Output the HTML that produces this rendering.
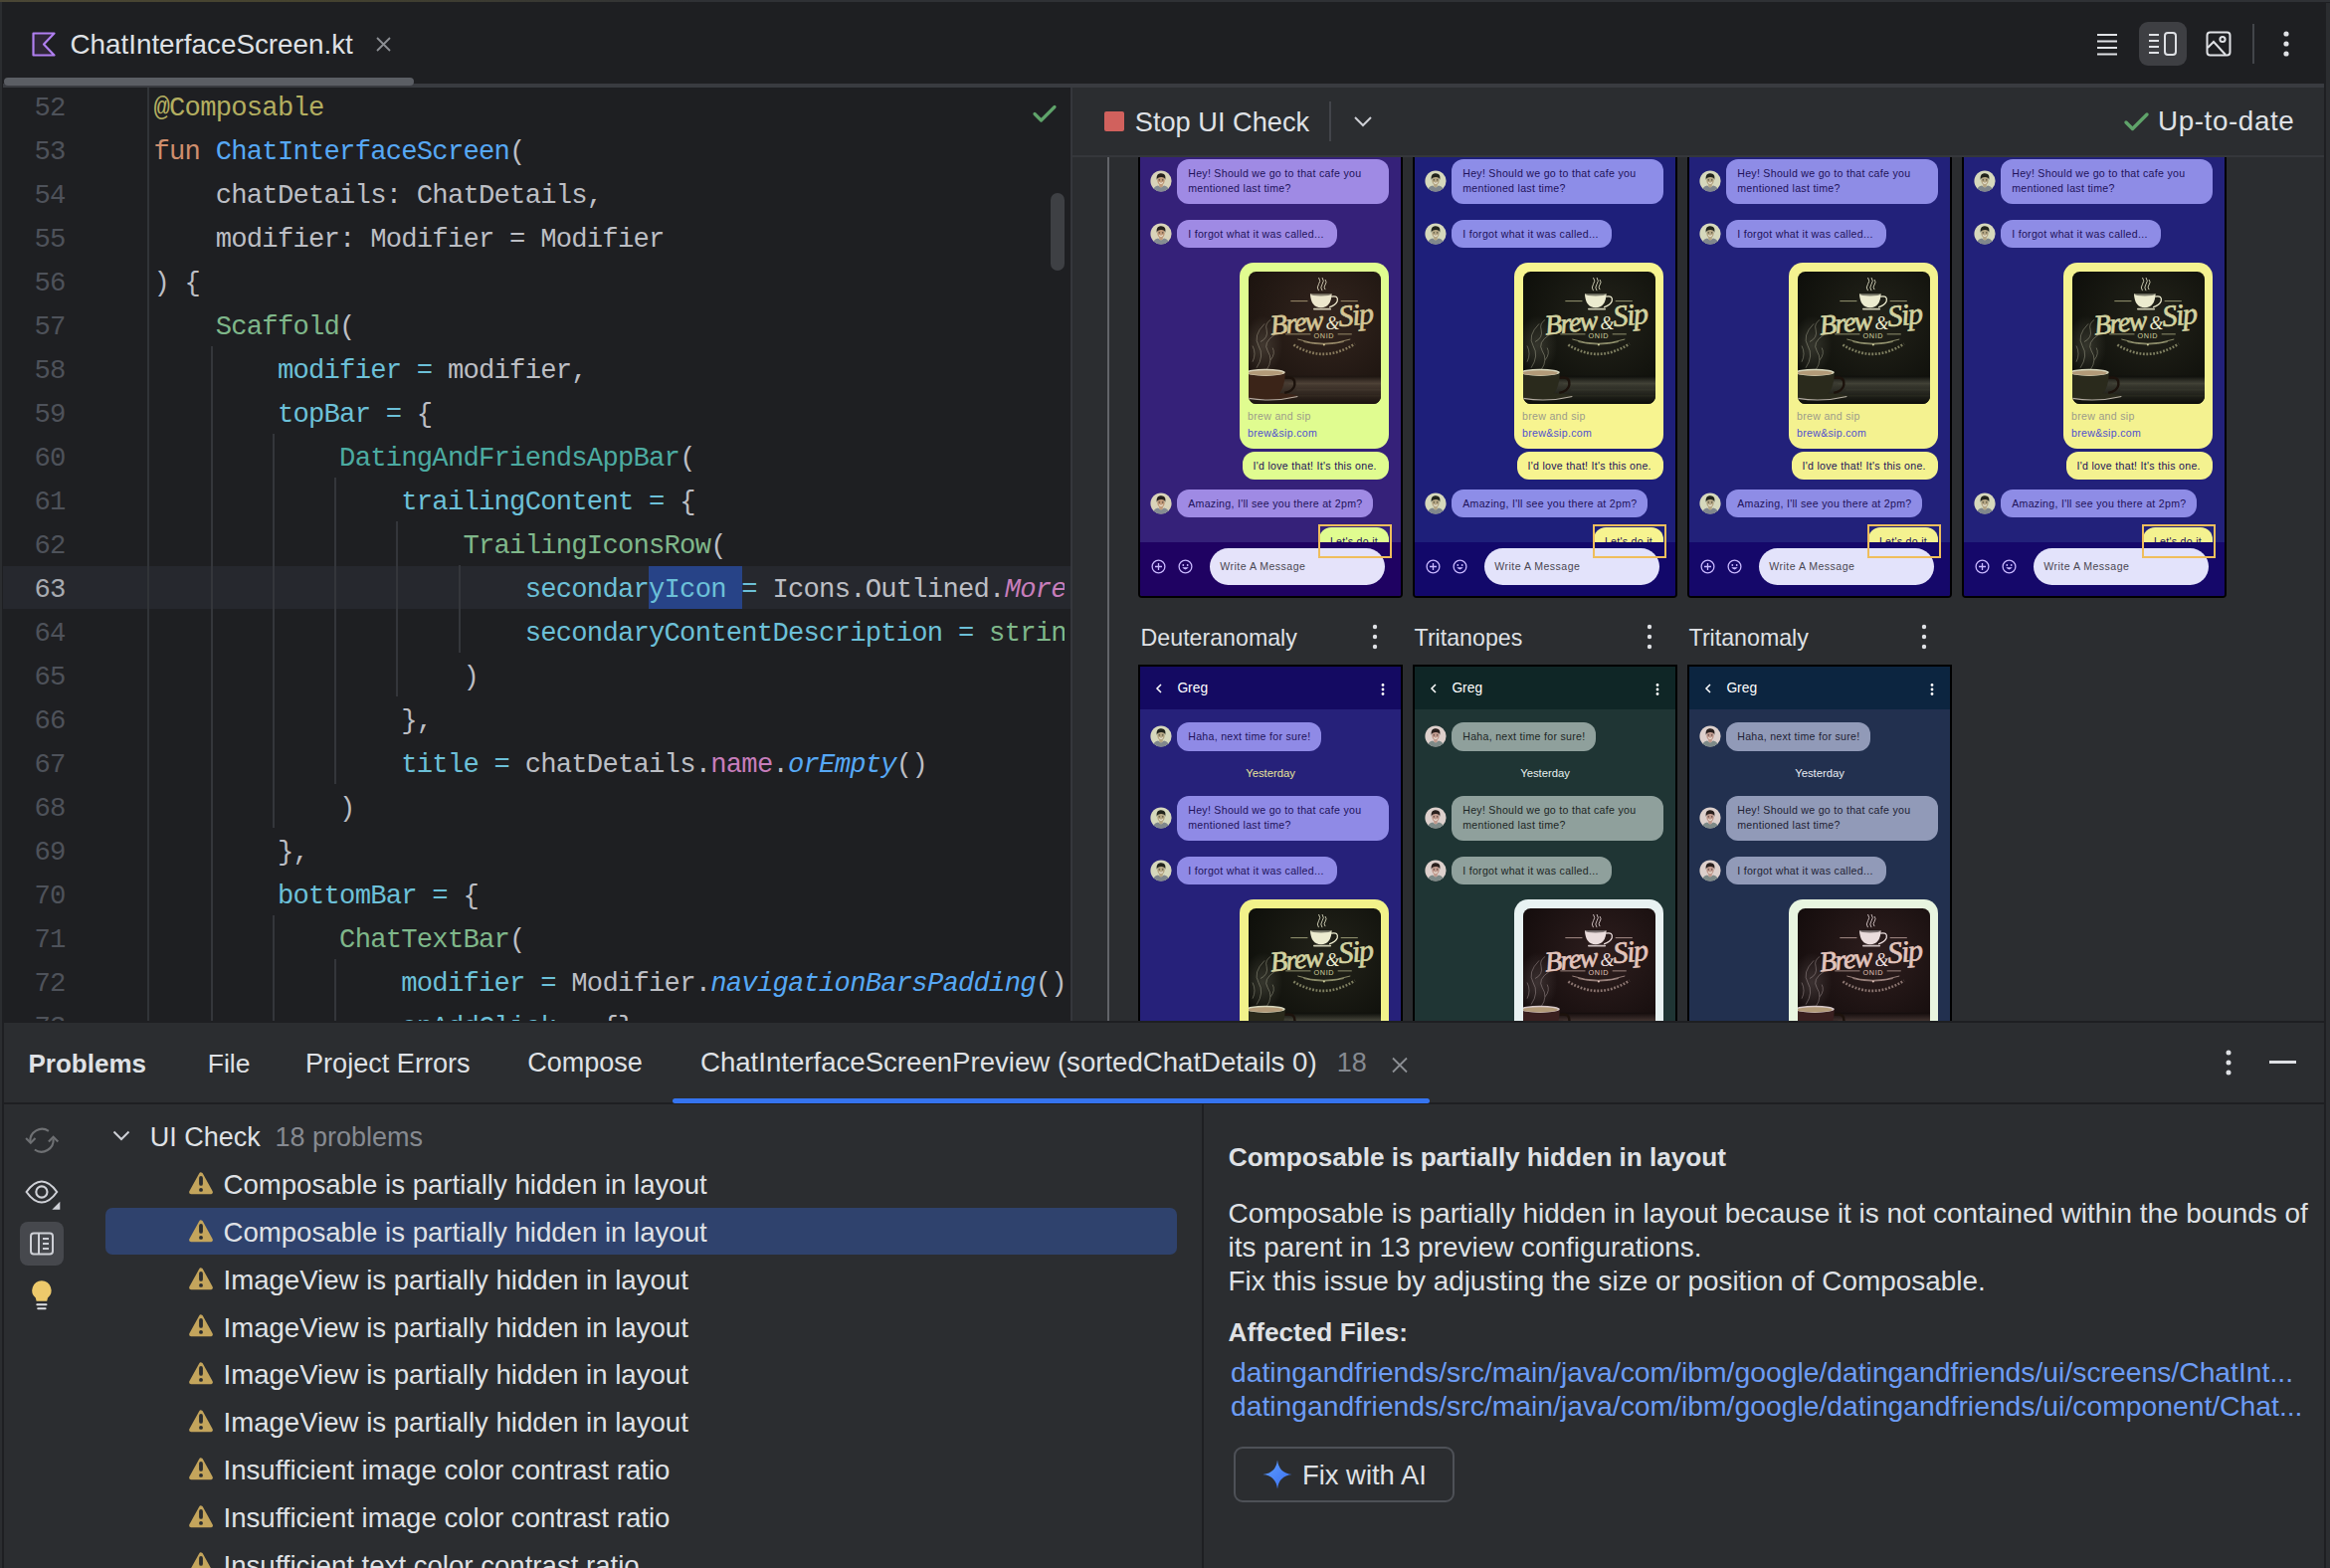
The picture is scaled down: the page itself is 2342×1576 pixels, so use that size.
<!DOCTYPE html>
<html><head><meta charset="utf-8"><style>
html,body{margin:0;padding:0;}
body{width:2342px;height:1576px;overflow:hidden;position:relative;background:#1e1f22;font-family:"Liberation Sans", sans-serif;}
.t{position:absolute;white-space:pre;}
.r{position:absolute;}
.a{position:absolute;}
svg{position:absolute;overflow:visible;}
</style></head><body>
<div class="r" style="left:0px;top:0px;width:2342px;height:2px;background:linear-gradient(90deg,#4a4635 0px,#46432f 300px,#2f3135 700px,#2f3135 2342px);"></div><div class="r" style="left:0px;top:2px;width:2px;height:1574px;background:#2b2d30;"></div><div class="r" style="left:2px;top:2px;width:2px;height:1574px;background:#1e1f22;"></div><div class="r" style="left:2336px;top:3px;width:2px;height:1573px;background:#1e1f22;"></div><div class="r" style="left:2338px;top:3px;width:4px;height:1573px;background:#2b2d30;"></div><div class="r" style="left:3px;top:3px;width:2333px;height:85px;background:#1e1f22;"></div><svg style="left:32px;top:32px" width="25" height="25" viewBox="0 0 25 25"><path d="M1.5 1.5 H22.5 L12 12.5 L22.5 23.5 H1.5 Z" fill="#2f2638" stroke="#b07ff0" stroke-width="2.2" stroke-linejoin="round"/></svg><div class="t" style="left:70.50px;top:27.16px;font-size:27.8px;line-height:36px;color:#dfe1e5;">ChatInterfaceScreen.kt</div><svg style="left:378px;top:37px" width="15" height="15" viewBox="0 0 15 15"><path d="M1 1L14 14M14 1L1 14" stroke="#8c8f94" stroke-width="1.8"/></svg><div class="r" style="left:3px;top:84px;width:2333px;height:4px;background:#393b40;"></div><div class="r" style="left:4px;top:78px;width:412px;height:8px;background:#5b5e64;border-radius:4px;"></div><svg style="left:2106px;top:32px" width="24" height="26" viewBox="0 0 24 26"><path d="M2 3H22M2 9.5H22M2 16H22M2 22.5H22" stroke="#dfe1e5" stroke-width="2"/></svg><div class="r" style="left:2150px;top:22px;width:48px;height:44px;background:#3e3f43;border-radius:9px;"></div><svg style="left:2158px;top:31px" width="32" height="28" viewBox="0 0 32 28"><path d="M2 3.9H12M2 10H12M2 16H12M2 21.9H12" stroke="#dfe1e5" stroke-width="2"/><rect x="18" y="2" width="11" height="22" rx="3" fill="none" stroke="#dfe1e5" stroke-width="2"/></svg><svg style="left:2217px;top:31px" width="28" height="28" viewBox="0 0 28 28"><rect x="1.5" y="1.5" width="23" height="23" rx="3" fill="none" stroke="#dfe1e5" stroke-width="2"/><circle cx="17" cy="8.5" r="2.6" fill="none" stroke="#dfe1e5" stroke-width="2"/><path d="M2 17L8 11L20 24" fill="none" stroke="#dfe1e5" stroke-width="2"/></svg><div class="r" style="left:2264px;top:24px;width:2px;height:40px;background:#43454a;"></div><svg style="left:2293px;top:29px" width="10" height="30" viewBox="0 0 10 30"><circle cx="5" cy="5" r="2.6" fill="#dfe1e5"/><circle cx="5" cy="15" r="2.6" fill="#dfe1e5"/><circle cx="5" cy="25" r="2.6" fill="#dfe1e5"/></svg><div class="r" style="left:3px;top:88px;width:1073px;height:938px;background:#1e1f22;"></div><div class="a" style="left:0;top:88px;width:1070px;height:938px;overflow:hidden;"><div class="a" style="left:0;top:-88px;width:1070px;height:1576px;"><div class="r" style="left:3px;top:569px;width:1073px;height:43px;background:#26282e;"></div><div class="r" style="left:652px;top:569px;width:94px;height:43px;background:#274387;"></div><div class="r" style="left:148px;top:88px;width:2px;height:938px;background:#313438;"></div><div class="r" style="left:212px;top:348px;width:2px;height:678px;background:#34363b;"></div><div class="r" style="left:274px;top:436px;width:2px;height:396px;background:#34363b;"></div><div class="r" style="left:274px;top:920px;width:2px;height:106px;background:#34363b;"></div><div class="r" style="left:336px;top:480px;width:2px;height:308px;background:#34363b;"></div><div class="r" style="left:336px;top:964px;width:2px;height:62px;background:#34363b;"></div><div class="r" style="left:398px;top:524px;width:2px;height:176px;background:#34363b;"></div><div class="r" style="left:461px;top:568px;width:2px;height:88px;background:#34363b;"></div><div class="t" style="left:34.40px;top:91.16px;font-size:27.2px;line-height:35px;color:#4e525a;font-family:'Liberation Mono', monospace;letter-spacing:-0.768px;">52</div><div class="t" style="left:154.50px;top:91.16px;font-size:27.2px;line-height:35px;color:#bcbec4;font-family:'Liberation Mono', monospace;letter-spacing:-0.768px;"><span style="color:#b3ae60;">@Composable</span></div><div class="t" style="left:34.40px;top:135.16px;font-size:27.2px;line-height:35px;color:#4e525a;font-family:'Liberation Mono', monospace;letter-spacing:-0.768px;">53</div><div class="t" style="left:154.50px;top:135.16px;font-size:27.2px;line-height:35px;color:#bcbec4;font-family:'Liberation Mono', monospace;letter-spacing:-0.768px;"><span style="color:#cf8e6d;">fun </span><span style="color:#56a8f5;">ChatInterfaceScreen</span><span style="color:#bcbec4;">(</span></div><div class="t" style="left:34.40px;top:179.16px;font-size:27.2px;line-height:35px;color:#4e525a;font-family:'Liberation Mono', monospace;letter-spacing:-0.768px;">54</div><div class="t" style="left:154.50px;top:179.16px;font-size:27.2px;line-height:35px;color:#bcbec4;font-family:'Liberation Mono', monospace;letter-spacing:-0.768px;"><span style="color:#bcbec4;">    chatDetails: ChatDetails,</span></div><div class="t" style="left:34.40px;top:223.16px;font-size:27.2px;line-height:35px;color:#4e525a;font-family:'Liberation Mono', monospace;letter-spacing:-0.768px;">55</div><div class="t" style="left:154.50px;top:223.16px;font-size:27.2px;line-height:35px;color:#bcbec4;font-family:'Liberation Mono', monospace;letter-spacing:-0.768px;"><span style="color:#bcbec4;">    modifier: Modifier = Modifier</span></div><div class="t" style="left:34.40px;top:267.16px;font-size:27.2px;line-height:35px;color:#4e525a;font-family:'Liberation Mono', monospace;letter-spacing:-0.768px;">56</div><div class="t" style="left:154.50px;top:267.16px;font-size:27.2px;line-height:35px;color:#bcbec4;font-family:'Liberation Mono', monospace;letter-spacing:-0.768px;"><span style="color:#bcbec4;">) {</span></div><div class="t" style="left:34.40px;top:311.16px;font-size:27.2px;line-height:35px;color:#4e525a;font-family:'Liberation Mono', monospace;letter-spacing:-0.768px;">57</div><div class="t" style="left:154.50px;top:311.16px;font-size:27.2px;line-height:35px;color:#bcbec4;font-family:'Liberation Mono', monospace;letter-spacing:-0.768px;"><span style="color:#bcbec4;">    </span><span style="color:#7fb78a;">Scaffold</span><span style="color:#bcbec4;">(</span></div><div class="t" style="left:34.40px;top:355.16px;font-size:27.2px;line-height:35px;color:#4e525a;font-family:'Liberation Mono', monospace;letter-spacing:-0.768px;">58</div><div class="t" style="left:154.50px;top:355.16px;font-size:27.2px;line-height:35px;color:#bcbec4;font-family:'Liberation Mono', monospace;letter-spacing:-0.768px;"><span style="color:#bcbec4;">        </span><span style="color:#6cc0d8;">modifier =</span><span style="color:#bcbec4;"> modifier,</span></div><div class="t" style="left:34.40px;top:399.16px;font-size:27.2px;line-height:35px;color:#4e525a;font-family:'Liberation Mono', monospace;letter-spacing:-0.768px;">59</div><div class="t" style="left:154.50px;top:399.16px;font-size:27.2px;line-height:35px;color:#bcbec4;font-family:'Liberation Mono', monospace;letter-spacing:-0.768px;"><span style="color:#bcbec4;">        </span><span style="color:#6cc0d8;">topBar =</span><span style="color:#bcbec4;"> {</span></div><div class="t" style="left:34.40px;top:443.16px;font-size:27.2px;line-height:35px;color:#4e525a;font-family:'Liberation Mono', monospace;letter-spacing:-0.768px;">60</div><div class="t" style="left:154.50px;top:443.16px;font-size:27.2px;line-height:35px;color:#bcbec4;font-family:'Liberation Mono', monospace;letter-spacing:-0.768px;"><span style="color:#bcbec4;">            </span><span style="color:#4caba1;">DatingAndFriendsAppBar</span><span style="color:#bcbec4;">(</span></div><div class="t" style="left:34.40px;top:487.16px;font-size:27.2px;line-height:35px;color:#4e525a;font-family:'Liberation Mono', monospace;letter-spacing:-0.768px;">61</div><div class="t" style="left:154.50px;top:487.16px;font-size:27.2px;line-height:35px;color:#bcbec4;font-family:'Liberation Mono', monospace;letter-spacing:-0.768px;"><span style="color:#bcbec4;">                </span><span style="color:#6cc0d8;">trailingContent =</span><span style="color:#bcbec4;"> {</span></div><div class="t" style="left:34.40px;top:531.16px;font-size:27.2px;line-height:35px;color:#4e525a;font-family:'Liberation Mono', monospace;letter-spacing:-0.768px;">62</div><div class="t" style="left:154.50px;top:531.16px;font-size:27.2px;line-height:35px;color:#bcbec4;font-family:'Liberation Mono', monospace;letter-spacing:-0.768px;"><span style="color:#bcbec4;">                    </span><span style="color:#7fb78a;">TrailingIconsRow</span><span style="color:#bcbec4;">(</span></div><div class="t" style="left:34.40px;top:575.16px;font-size:27.2px;line-height:35px;color:#a8abb1;font-family:'Liberation Mono', monospace;letter-spacing:-0.768px;">63</div><div class="t" style="left:154.50px;top:575.16px;font-size:27.2px;line-height:35px;color:#bcbec4;font-family:'Liberation Mono', monospace;letter-spacing:-0.768px;"><span style="color:#bcbec4;">                        </span><span style="color:#6cc0d8;">secondaryIcon</span><span style="color:#bcbec4;"> </span><span style="color:#6cc0d8;">=</span><span style="color:#bcbec4;"> Icons.Outlined.</span><span style="color:#c77dbb;font-style:italic;">More</span></div><div class="t" style="left:34.40px;top:619.16px;font-size:27.2px;line-height:35px;color:#4e525a;font-family:'Liberation Mono', monospace;letter-spacing:-0.768px;">64</div><div class="t" style="left:154.50px;top:619.16px;font-size:27.2px;line-height:35px;color:#bcbec4;font-family:'Liberation Mono', monospace;letter-spacing:-0.768px;"><span style="color:#bcbec4;">                        </span><span style="color:#6cc0d8;">secondaryContentDescription =</span><span style="color:#bcbec4;"> </span><span style="color:#7fb78a;">stringResource</span></div><div class="t" style="left:34.40px;top:663.16px;font-size:27.2px;line-height:35px;color:#4e525a;font-family:'Liberation Mono', monospace;letter-spacing:-0.768px;">65</div><div class="t" style="left:154.50px;top:663.16px;font-size:27.2px;line-height:35px;color:#bcbec4;font-family:'Liberation Mono', monospace;letter-spacing:-0.768px;"><span style="color:#bcbec4;">                    )</span></div><div class="t" style="left:34.40px;top:707.16px;font-size:27.2px;line-height:35px;color:#4e525a;font-family:'Liberation Mono', monospace;letter-spacing:-0.768px;">66</div><div class="t" style="left:154.50px;top:707.16px;font-size:27.2px;line-height:35px;color:#bcbec4;font-family:'Liberation Mono', monospace;letter-spacing:-0.768px;"><span style="color:#bcbec4;">                },</span></div><div class="t" style="left:34.40px;top:751.16px;font-size:27.2px;line-height:35px;color:#4e525a;font-family:'Liberation Mono', monospace;letter-spacing:-0.768px;">67</div><div class="t" style="left:154.50px;top:751.16px;font-size:27.2px;line-height:35px;color:#bcbec4;font-family:'Liberation Mono', monospace;letter-spacing:-0.768px;"><span style="color:#bcbec4;">                </span><span style="color:#6cc0d8;">title =</span><span style="color:#bcbec4;"> chatDetails.</span><span style="color:#c77dbb;">name</span><span style="color:#bcbec4;">.</span><span style="color:#56a8f5;font-style:italic;">orEmpty</span><span style="color:#bcbec4;">()</span></div><div class="t" style="left:34.40px;top:795.16px;font-size:27.2px;line-height:35px;color:#4e525a;font-family:'Liberation Mono', monospace;letter-spacing:-0.768px;">68</div><div class="t" style="left:154.50px;top:795.16px;font-size:27.2px;line-height:35px;color:#bcbec4;font-family:'Liberation Mono', monospace;letter-spacing:-0.768px;"><span style="color:#bcbec4;">            )</span></div><div class="t" style="left:34.40px;top:839.16px;font-size:27.2px;line-height:35px;color:#4e525a;font-family:'Liberation Mono', monospace;letter-spacing:-0.768px;">69</div><div class="t" style="left:154.50px;top:839.16px;font-size:27.2px;line-height:35px;color:#bcbec4;font-family:'Liberation Mono', monospace;letter-spacing:-0.768px;"><span style="color:#bcbec4;">        },</span></div><div class="t" style="left:34.40px;top:883.16px;font-size:27.2px;line-height:35px;color:#4e525a;font-family:'Liberation Mono', monospace;letter-spacing:-0.768px;">70</div><div class="t" style="left:154.50px;top:883.16px;font-size:27.2px;line-height:35px;color:#bcbec4;font-family:'Liberation Mono', monospace;letter-spacing:-0.768px;"><span style="color:#bcbec4;">        </span><span style="color:#6cc0d8;">bottomBar =</span><span style="color:#bcbec4;"> {</span></div><div class="t" style="left:34.40px;top:927.16px;font-size:27.2px;line-height:35px;color:#4e525a;font-family:'Liberation Mono', monospace;letter-spacing:-0.768px;">71</div><div class="t" style="left:154.50px;top:927.16px;font-size:27.2px;line-height:35px;color:#bcbec4;font-family:'Liberation Mono', monospace;letter-spacing:-0.768px;"><span style="color:#bcbec4;">            </span><span style="color:#7fb78a;">ChatTextBar</span><span style="color:#bcbec4;">(</span></div><div class="t" style="left:34.40px;top:971.16px;font-size:27.2px;line-height:35px;color:#4e525a;font-family:'Liberation Mono', monospace;letter-spacing:-0.768px;">72</div><div class="t" style="left:154.50px;top:971.16px;font-size:27.2px;line-height:35px;color:#bcbec4;font-family:'Liberation Mono', monospace;letter-spacing:-0.768px;"><span style="color:#bcbec4;">                </span><span style="color:#6cc0d8;">modifier =</span><span style="color:#bcbec4;"> Modifier.</span><span style="color:#56a8f5;font-style:italic;">navigationBarsPadding</span><span style="color:#bcbec4;">()</span></div><div class="t" style="left:34.40px;top:1015.16px;font-size:27.2px;line-height:35px;color:#4e525a;font-family:'Liberation Mono', monospace;letter-spacing:-0.768px;">73</div><div class="t" style="left:154.50px;top:1015.16px;font-size:27.2px;line-height:35px;color:#bcbec4;font-family:'Liberation Mono', monospace;letter-spacing:-0.768px;"><span style="color:#bcbec4;">                </span><span style="color:#6cc0d8;">onAddClick =</span><span style="color:#bcbec4;"> {},</span></div></div></div><svg style="left:1037px;top:105px" width="26" height="20" viewBox="0 0 26 20"><path d="M3 9.5L9.5 16L23 2.5" fill="none" stroke="#5fa36a" stroke-width="3.2" stroke-linecap="round" stroke-linejoin="round"/></svg><div class="r" style="left:1056px;top:194px;width:14px;height:78px;background:#3e4044;border-radius:7px;"></div><div class="r" style="left:1070px;top:569px;width:6px;height:43px;background:#26282e;"></div><div class="r" style="left:1076px;top:88px;width:2px;height:938px;background:#35373c;"></div><div class="r" style="left:1078px;top:88px;width:1258px;height:938px;background:#2b2d30;"></div><div class="r" style="left:1078px;top:156px;width:1258px;height:2px;background:#35373b;"></div><div class="r" style="left:1110px;top:112px;width:20px;height:20px;background:#d1615d;border-radius:2px;"></div><div class="t" style="left:1140.80px;top:105.27px;font-size:27.2px;line-height:35px;color:#dfe1e5;">Stop UI Check</div><div class="r" style="left:1336px;top:102px;width:2px;height:40px;background:#43454a;"></div><svg style="left:1359px;top:114px" width="22" height="16" viewBox="0 0 22 16"><path d="M3 4L11 12L19 4" fill="none" stroke="#ced0d6" stroke-width="2"/></svg><svg style="left:2133px;top:110px" width="30" height="24" viewBox="0 0 30 24"><path d="M4 13L10.5 19.5L25 5" fill="none" stroke="#5fa36a" stroke-width="3.4" stroke-linecap="round" stroke-linejoin="round"/></svg><div class="t" style="left:2169.00px;top:104.26px;font-size:27.8px;line-height:36px;color:#dfe1e5;letter-spacing:0.6px;">Up-to-date</div><div class="a" style="left:1078px;top:158px;width:1258px;height:868px;overflow:hidden;"><div class="a" style="left:-1078px;top:-158px;width:2342px;height:1576px;"><div class="r" style="left:1113px;top:158px;width:2px;height:868px;background:#626469;"></div><div class="a" style="left:1144px;top:28px;width:262px;height:569px;border:2px solid #000;border-radius:0 0 4px 4px;background:#352179;overflow:hidden;"><div class="r" style="left:0px;top:0px;width:262px;height:43px;background:#23096a;"></div><svg style="left:15px;top:16.5px" width="8" height="10" viewBox="0 0 8 10"><path d="M6 1L2 5L6 9" stroke="#ffffff" stroke-width="1.5" fill="none"/></svg><div class="t" style="left:37.40px;top:13.02px;font-size:13.8px;line-height:18px;color:#ffffff;">Greg</div><svg style="left:240.5px;top:16.5px" width="6" height="12" viewBox="0 0 6 12"><circle cx="3" cy="1.5" r="1.4" fill="#fff"/><circle cx="3" cy="6" r="1.4" fill="#fff"/><circle cx="3" cy="10.5" r="1.4" fill="#fff"/></svg><div class="r" style="left:37px;top:56px;width:145px;height:29px;background:#9f8ae4;border-radius:12px;"></div><div class="t" style="left:48.20px;top:63.12px;font-size:10.6px;line-height:14px;color:#21125a;letter-spacing:0.29px;">Haha, next time for sure!</div><svg style="left:10px;top:59px" width="22" height="22" viewBox="0 0 22 22"><defs><clipPath id="ac"><circle cx="11" cy="11" r="10.6"/></clipPath></defs><g clip-path="url(#ac)"><rect width="22" height="22" fill="#d9d3b9"/><path d="M2 22 Q3 16.5 8 15.5 L11 17.5 L14 15.5 Q19 16.5 20 22Z" fill="#858c92"/><path d="M9.2 13.5 H12.8 V16.5 L11 17.5 L9.2 16.5Z" fill="#c09a7a"/><ellipse cx="11" cy="10.6" rx="3.7" ry="4.6" fill="#c09a7a"/><path d="M6.8 9.8 C6 5.2 8.2 3.2 11.2 3.3 C14.5 3.4 16.2 5.6 15.2 9.8 C14.8 7.6 13.6 6.8 11 6.9 C8.6 7 7.3 7.8 6.8 9.8Z" fill="#26201c"/><path d="M9.1 12.6 Q11 14.2 12.9 12.6" stroke="#f4f0e4" stroke-width="1" fill="none"/><path d="M8.6 9.9H10M12 9.9H13.4" stroke="#26201c" stroke-width="0.8"/></g></svg><div class="t" style="left:106.20px;top:99.58px;font-size:11.3px;line-height:15px;color:#e6e09a;">Yesterday</div><div class="r" style="left:37px;top:130px;width:213px;height:45px;background:#9f8ae4;border-radius:12px;"></div><div class="t" style="left:48.20px;top:136.97px;font-size:10.6px;line-height:14px;color:#21125a;letter-spacing:0.29px;">Hey! Should we go to that cafe you</div><div class="t" style="left:48.20px;top:152.07px;font-size:10.6px;line-height:14px;color:#21125a;letter-spacing:0.29px;">mentioned last time?</div><svg style="left:10px;top:141px" width="22" height="22" viewBox="0 0 22 22"><defs><clipPath id="ac"><circle cx="11" cy="11" r="10.6"/></clipPath></defs><g clip-path="url(#ac)"><rect width="22" height="22" fill="#d9d3b9"/><path d="M2 22 Q3 16.5 8 15.5 L11 17.5 L14 15.5 Q19 16.5 20 22Z" fill="#858c92"/><path d="M9.2 13.5 H12.8 V16.5 L11 17.5 L9.2 16.5Z" fill="#c09a7a"/><ellipse cx="11" cy="10.6" rx="3.7" ry="4.6" fill="#c09a7a"/><path d="M6.8 9.8 C6 5.2 8.2 3.2 11.2 3.3 C14.5 3.4 16.2 5.6 15.2 9.8 C14.8 7.6 13.6 6.8 11 6.9 C8.6 7 7.3 7.8 6.8 9.8Z" fill="#26201c"/><path d="M9.1 12.6 Q11 14.2 12.9 12.6" stroke="#f4f0e4" stroke-width="1" fill="none"/><path d="M8.6 9.9H10M12 9.9H13.4" stroke="#26201c" stroke-width="0.8"/></g></svg><div class="r" style="left:37px;top:191px;width:161px;height:28px;background:#9f8ae4;border-radius:12px;"></div><div class="t" style="left:48.20px;top:197.97px;font-size:10.6px;line-height:14px;color:#21125a;letter-spacing:0.29px;">I forgot what it was called...</div><svg style="left:10px;top:194px" width="22" height="22" viewBox="0 0 22 22"><defs><clipPath id="ac"><circle cx="11" cy="11" r="10.6"/></clipPath></defs><g clip-path="url(#ac)"><rect width="22" height="22" fill="#d9d3b9"/><path d="M2 22 Q3 16.5 8 15.5 L11 17.5 L14 15.5 Q19 16.5 20 22Z" fill="#858c92"/><path d="M9.2 13.5 H12.8 V16.5 L11 17.5 L9.2 16.5Z" fill="#c09a7a"/><ellipse cx="11" cy="10.6" rx="3.7" ry="4.6" fill="#c09a7a"/><path d="M6.8 9.8 C6 5.2 8.2 3.2 11.2 3.3 C14.5 3.4 16.2 5.6 15.2 9.8 C14.8 7.6 13.6 6.8 11 6.9 C8.6 7 7.3 7.8 6.8 9.8Z" fill="#26201c"/><path d="M9.1 12.6 Q11 14.2 12.9 12.6" stroke="#f4f0e4" stroke-width="1" fill="none"/><path d="M8.6 9.9H10M12 9.9H13.4" stroke="#26201c" stroke-width="0.8"/></g></svg><div class="r" style="left:100px;top:234px;width:150px;height:187px;background:#e0fc90;border-radius:14px;"></div><svg style="left:109px;top:243px" width="133" height="133" viewBox="0 0 132 132"><defs><radialGradient id="bgb1" cx="0.6" cy="0.35" r="0.75"><stop offset="0" stop-color="#33251e"/><stop offset="1" stop-color="#1a120e"/></radialGradient><linearGradient id="tbb1" x1="0" y1="0" x2="0" y2="1"><stop offset="0" stop-color="#1a120e"/><stop offset="0.25" stop-color="#4a3e34"/><stop offset="1" stop-color="#1a120e"/></linearGradient><clipPath id="clb1"><rect width="132" height="132" rx="7.5"/></clipPath></defs><g clip-path="url(#clb1)"><rect width="132" height="132" fill="url(#bgb1)"/><rect y="104" width="132" height="28" fill="url(#tbb1)"/><path d="M40 112H132M48 118H132M36 124H132" stroke="#d4c595" stroke-width="0.5" opacity="0.12"/><path d="M70 19 q-2.5 -3 0 -6.5 q2.5 -3 0 -6.5 M73.5 19 q-2.5 -3 0 -6.5 q2.5 -3 0 -6.5 M76.5 18 q-2 -2.5 0 -5 q2 -2.5 0 -5" stroke="#ece6cc" stroke-width="0.9" fill="none" opacity="0.9"/><path d="M61.5 22 H83 Q82.5 35.5 72.3 36 Q62 35.5 61.5 22Z" fill="#ece6cc"/><ellipse cx="72.2" cy="22.6" rx="10.5" ry="1.6" fill="#1a120e" opacity="0.5"/><path d="M82.5 25 q7.5 -1.5 6 4.5 q-1.5 4 -8 6" stroke="#ece6cc" stroke-width="1.3" fill="none"/><rect x="64.5" y="36.4" width="18" height="1.8" rx="0.9" fill="#ece6cc" opacity="0.85"/><path d="M42 29.4 H59 M92 29.4 H109" stroke="#d4c595" stroke-width="0.9" opacity="0.75"/><text x="22" y="60" font-family="Liberation Serif" font-style="italic" font-size="28" fill="#d4c595" stroke="#d4c595" stroke-width="0.7" letter-spacing="-1.6" transform="rotate(-6 50 55)">Brew</text><text x="77" y="58" font-family="Liberation Serif" font-style="italic" font-size="18" fill="#ece6cc">&amp;</text><text x="90" y="53" font-family="Liberation Serif" font-style="italic" font-size="30" fill="#d4c595" stroke="#d4c595" stroke-width="0.7" letter-spacing="-1.4" transform="rotate(-6 108 48)">Sip</text><path d="M37 62.4 H62 M89 62.4 H103" stroke="#d4c595" stroke-width="0.8" opacity="0.8"/><text x="75.3" y="66.3" text-anchor="middle" font-family="Liberation Sans" font-size="7.2" fill="#d4c595" letter-spacing="0.6">ONID</text><path d="M49 67.5 Q75 76 101.5 67.5 M55 70 Q75 75 95 70" stroke="#d4c595" stroke-width="0.7" fill="none" opacity="0.85"/><circle cx="75.3" cy="73" r="1" fill="#d4c595"/><path d="M45 73 Q75 92 106 72" stroke="#d4c595" stroke-width="2.6" fill="none" stroke-dasharray="1.8 1.6" opacity="0.55"/><radialGradient id="smb1" cx="0.5" cy="0.5" r="0.5"><stop offset="0" stop-color="#ece6cc" stop-opacity="0.16"/><stop offset="1" stop-color="#ece6cc" stop-opacity="0"/></radialGradient><ellipse cx="14" cy="74" rx="20" ry="30" fill="url(#smb1)"/><path d="M8 96 q8 -12 2 -22 q-6 -10 6 -22 M18 98 q7 -10 1 -19 q-5 -8 7 -16 M4 90 q4 -8 0 -16 M12 70 q8 -4 6 -12 q-2 -6 4 -10 M22 88 q5 -6 2 -12" stroke="#ece6cc" stroke-width="0.8" fill="none" opacity="0.38"/><ellipse cx="22" cy="124.5" rx="27" ry="3.4" fill="#3b2418"/><path d="M-5 125.5 Q22 131 49 124.5" stroke="#d8d0c4" stroke-width="1" fill="none" opacity="0.8"/><path d="M36 106 q11 -2 10 7 q-1 6 -10 8" stroke="#1c120c" stroke-width="2.4" fill="none"/><path d="M-2 100.5 H36.5 Q36 121 26 124 H-2Z" fill="#3b2418"/><ellipse cx="17" cy="100.5" rx="19.5" ry="3.6" fill="#ece6cc" opacity="0.9"/><ellipse cx="17" cy="101" rx="17.5" ry="2.6" fill="#b29a78"/></g></svg><div class="t" style="left:108.00px;top:381.32px;font-size:10.6px;line-height:14px;color:#9c9c8a;letter-spacing:0.3px;">brew and sip</div><div class="t" style="left:108.00px;top:397.82px;font-size:10.6px;line-height:14px;color:#5050d0;letter-spacing:0.3px;">brew&amp;sip.com</div><div class="r" style="left:103px;top:424px;width:147px;height:28px;background:#e0fc90;border-radius:12px;"></div><div class="t" style="left:113.50px;top:430.87px;font-size:10.6px;line-height:14px;color:#21125a;letter-spacing:0.29px;">I&#x27;d love that! It&#x27;s this one.</div><div class="r" style="left:37px;top:462px;width:197px;height:28px;background:#9f8ae4;border-radius:12px;"></div><div class="t" style="left:48.20px;top:469.02px;font-size:10.6px;line-height:14px;color:#21125a;letter-spacing:0.29px;">Amazing, I&#x27;ll see you there at 2pm?</div><svg style="left:10px;top:465px" width="22" height="22" viewBox="0 0 22 22"><defs><clipPath id="ac"><circle cx="11" cy="11" r="10.6"/></clipPath></defs><g clip-path="url(#ac)"><rect width="22" height="22" fill="#d9d3b9"/><path d="M2 22 Q3 16.5 8 15.5 L11 17.5 L14 15.5 Q19 16.5 20 22Z" fill="#858c92"/><path d="M9.2 13.5 H12.8 V16.5 L11 17.5 L9.2 16.5Z" fill="#c09a7a"/><ellipse cx="11" cy="10.6" rx="3.7" ry="4.6" fill="#c09a7a"/><path d="M6.8 9.8 C6 5.2 8.2 3.2 11.2 3.3 C14.5 3.4 16.2 5.6 15.2 9.8 C14.8 7.6 13.6 6.8 11 6.9 C8.6 7 7.3 7.8 6.8 9.8Z" fill="#26201c"/><path d="M9.1 12.6 Q11 14.2 12.9 12.6" stroke="#f4f0e4" stroke-width="1" fill="none"/><path d="M8.6 9.9H10M12 9.9H13.4" stroke="#26201c" stroke-width="0.8"/></g></svg><div class="r" style="left:180px;top:500px;width:70px;height:28px;background:#e0fc90;border-radius:12px;"></div><div class="t" style="left:190.90px;top:506.72px;font-size:10.6px;line-height:14px;color:#21125a;letter-spacing:0.29px;">Let&#x27;s do it</div><div class="r" style="left:0px;top:515px;width:262px;height:60px;background:#1f0262;"></div><svg style="left:11.1px;top:531.5px" width="15" height="15" viewBox="0 0 15 15"><circle cx="7.5" cy="7.5" r="6.4" stroke="#c9b8ff" stroke-width="1.3" fill="none"/><path d="M7.5 4V11M4 7.5H11" stroke="#c9b8ff" stroke-width="1.3"/></svg><svg style="left:37.9px;top:531.5px" width="15" height="15" viewBox="0 0 15 15"><circle cx="7.5" cy="7.5" r="6.4" stroke="#c9b8ff" stroke-width="1.3" fill="none"/><circle cx="5.3" cy="6" r="0.9" fill="#c9b8ff"/><circle cx="9.7" cy="6" r="0.9" fill="#c9b8ff"/><path d="M4.3 8.3 Q7.5 12.5 10.7 8.3Z" fill="#c9b8ff"/></svg><div class="r" style="left:70px;top:521px;width:176px;height:37px;background:#e5e3fa;border-radius:18.5px;"></div><div class="t" style="left:80.30px;top:532.32px;font-size:10.6px;line-height:14px;color:#4a4752;letter-spacing:0.45px;">Write A Message</div></div><div class="r" style="left:1325px;top:527px;width:70px;height:30px;background:transparent;border:2px solid #efbe5c;"></div><div class="a" style="left:1420px;top:28px;width:262px;height:569px;border:2px solid #000;border-radius:0 0 4px 4px;background:#1e1f7a;overflow:hidden;"><div class="r" style="left:0px;top:0px;width:262px;height:43px;background:#120a6a;"></div><svg style="left:15px;top:16.5px" width="8" height="10" viewBox="0 0 8 10"><path d="M6 1L2 5L6 9" stroke="#ffffff" stroke-width="1.5" fill="none"/></svg><div class="t" style="left:37.40px;top:13.02px;font-size:13.8px;line-height:18px;color:#ffffff;">Greg</div><svg style="left:240.5px;top:16.5px" width="6" height="12" viewBox="0 0 6 12"><circle cx="3" cy="1.5" r="1.4" fill="#fff"/><circle cx="3" cy="6" r="1.4" fill="#fff"/><circle cx="3" cy="10.5" r="1.4" fill="#fff"/></svg><div class="r" style="left:37px;top:56px;width:145px;height:29px;background:#8d8de8;border-radius:12px;"></div><div class="t" style="left:48.20px;top:63.12px;font-size:10.6px;line-height:14px;color:#21125a;letter-spacing:0.29px;">Haha, next time for sure!</div><svg style="left:10px;top:59px" width="22" height="22" viewBox="0 0 22 22"><defs><clipPath id="ac"><circle cx="11" cy="11" r="10.6"/></clipPath></defs><g clip-path="url(#ac)"><rect width="22" height="22" fill="#d6d8bc"/><path d="M2 22 Q3 16.5 8 15.5 L11 17.5 L14 15.5 Q19 16.5 20 22Z" fill="#80878c"/><path d="M9.2 13.5 H12.8 V16.5 L11 17.5 L9.2 16.5Z" fill="#b4a684"/><ellipse cx="11" cy="10.6" rx="3.7" ry="4.6" fill="#b4a684"/><path d="M6.8 9.8 C6 5.2 8.2 3.2 11.2 3.3 C14.5 3.4 16.2 5.6 15.2 9.8 C14.8 7.6 13.6 6.8 11 6.9 C8.6 7 7.3 7.8 6.8 9.8Z" fill="#22241c"/><path d="M9.1 12.6 Q11 14.2 12.9 12.6" stroke="#f4f0e4" stroke-width="1" fill="none"/><path d="M8.6 9.9H10M12 9.9H13.4" stroke="#22241c" stroke-width="0.8"/></g></svg><div class="t" style="left:106.20px;top:99.58px;font-size:11.3px;line-height:15px;color:#e6e09a;">Yesterday</div><div class="r" style="left:37px;top:130px;width:213px;height:45px;background:#8d8de8;border-radius:12px;"></div><div class="t" style="left:48.20px;top:136.97px;font-size:10.6px;line-height:14px;color:#21125a;letter-spacing:0.29px;">Hey! Should we go to that cafe you</div><div class="t" style="left:48.20px;top:152.07px;font-size:10.6px;line-height:14px;color:#21125a;letter-spacing:0.29px;">mentioned last time?</div><svg style="left:10px;top:141px" width="22" height="22" viewBox="0 0 22 22"><defs><clipPath id="ac"><circle cx="11" cy="11" r="10.6"/></clipPath></defs><g clip-path="url(#ac)"><rect width="22" height="22" fill="#d6d8bc"/><path d="M2 22 Q3 16.5 8 15.5 L11 17.5 L14 15.5 Q19 16.5 20 22Z" fill="#80878c"/><path d="M9.2 13.5 H12.8 V16.5 L11 17.5 L9.2 16.5Z" fill="#b4a684"/><ellipse cx="11" cy="10.6" rx="3.7" ry="4.6" fill="#b4a684"/><path d="M6.8 9.8 C6 5.2 8.2 3.2 11.2 3.3 C14.5 3.4 16.2 5.6 15.2 9.8 C14.8 7.6 13.6 6.8 11 6.9 C8.6 7 7.3 7.8 6.8 9.8Z" fill="#22241c"/><path d="M9.1 12.6 Q11 14.2 12.9 12.6" stroke="#f4f0e4" stroke-width="1" fill="none"/><path d="M8.6 9.9H10M12 9.9H13.4" stroke="#22241c" stroke-width="0.8"/></g></svg><div class="r" style="left:37px;top:191px;width:161px;height:28px;background:#8d8de8;border-radius:12px;"></div><div class="t" style="left:48.20px;top:197.97px;font-size:10.6px;line-height:14px;color:#21125a;letter-spacing:0.29px;">I forgot what it was called...</div><svg style="left:10px;top:194px" width="22" height="22" viewBox="0 0 22 22"><defs><clipPath id="ac"><circle cx="11" cy="11" r="10.6"/></clipPath></defs><g clip-path="url(#ac)"><rect width="22" height="22" fill="#d6d8bc"/><path d="M2 22 Q3 16.5 8 15.5 L11 17.5 L14 15.5 Q19 16.5 20 22Z" fill="#80878c"/><path d="M9.2 13.5 H12.8 V16.5 L11 17.5 L9.2 16.5Z" fill="#b4a684"/><ellipse cx="11" cy="10.6" rx="3.7" ry="4.6" fill="#b4a684"/><path d="M6.8 9.8 C6 5.2 8.2 3.2 11.2 3.3 C14.5 3.4 16.2 5.6 15.2 9.8 C14.8 7.6 13.6 6.8 11 6.9 C8.6 7 7.3 7.8 6.8 9.8Z" fill="#22241c"/><path d="M9.1 12.6 Q11 14.2 12.9 12.6" stroke="#f4f0e4" stroke-width="1" fill="none"/><path d="M8.6 9.9H10M12 9.9H13.4" stroke="#22241c" stroke-width="0.8"/></g></svg><div class="r" style="left:100px;top:234px;width:150px;height:187px;background:#f7f490;border-radius:14px;"></div><svg style="left:109px;top:243px" width="133" height="133" viewBox="0 0 132 132"><defs><radialGradient id="bgb2" cx="0.6" cy="0.35" r="0.75"><stop offset="0" stop-color="#23231a"/><stop offset="1" stop-color="#0c0d09"/></radialGradient><linearGradient id="tbb2" x1="0" y1="0" x2="0" y2="1"><stop offset="0" stop-color="#0c0d09"/><stop offset="0.25" stop-color="#3e3e34"/><stop offset="1" stop-color="#0c0d09"/></linearGradient><clipPath id="clb2"><rect width="132" height="132" rx="7.5"/></clipPath></defs><g clip-path="url(#clb2)"><rect width="132" height="132" fill="url(#bgb2)"/><rect y="104" width="132" height="28" fill="url(#tbb2)"/><path d="M40 112H132M48 118H132M36 124H132" stroke="#d2d2a0" stroke-width="0.5" opacity="0.12"/><path d="M70 19 q-2.5 -3 0 -6.5 q2.5 -3 0 -6.5 M73.5 19 q-2.5 -3 0 -6.5 q2.5 -3 0 -6.5 M76.5 18 q-2 -2.5 0 -5 q2 -2.5 0 -5" stroke="#ecebcf" stroke-width="0.9" fill="none" opacity="0.9"/><path d="M61.5 22 H83 Q82.5 35.5 72.3 36 Q62 35.5 61.5 22Z" fill="#ecebcf"/><ellipse cx="72.2" cy="22.6" rx="10.5" ry="1.6" fill="#0c0d09" opacity="0.5"/><path d="M82.5 25 q7.5 -1.5 6 4.5 q-1.5 4 -8 6" stroke="#ecebcf" stroke-width="1.3" fill="none"/><rect x="64.5" y="36.4" width="18" height="1.8" rx="0.9" fill="#ecebcf" opacity="0.85"/><path d="M42 29.4 H59 M92 29.4 H109" stroke="#d2d2a0" stroke-width="0.9" opacity="0.75"/><text x="22" y="60" font-family="Liberation Serif" font-style="italic" font-size="28" fill="#d2d2a0" stroke="#d2d2a0" stroke-width="0.7" letter-spacing="-1.6" transform="rotate(-6 50 55)">Brew</text><text x="77" y="58" font-family="Liberation Serif" font-style="italic" font-size="18" fill="#ecebcf">&amp;</text><text x="90" y="53" font-family="Liberation Serif" font-style="italic" font-size="30" fill="#d2d2a0" stroke="#d2d2a0" stroke-width="0.7" letter-spacing="-1.4" transform="rotate(-6 108 48)">Sip</text><path d="M37 62.4 H62 M89 62.4 H103" stroke="#d2d2a0" stroke-width="0.8" opacity="0.8"/><text x="75.3" y="66.3" text-anchor="middle" font-family="Liberation Sans" font-size="7.2" fill="#d2d2a0" letter-spacing="0.6">ONID</text><path d="M49 67.5 Q75 76 101.5 67.5 M55 70 Q75 75 95 70" stroke="#d2d2a0" stroke-width="0.7" fill="none" opacity="0.85"/><circle cx="75.3" cy="73" r="1" fill="#d2d2a0"/><path d="M45 73 Q75 92 106 72" stroke="#d2d2a0" stroke-width="2.6" fill="none" stroke-dasharray="1.8 1.6" opacity="0.55"/><radialGradient id="smb2" cx="0.5" cy="0.5" r="0.5"><stop offset="0" stop-color="#ecebcf" stop-opacity="0.16"/><stop offset="1" stop-color="#ecebcf" stop-opacity="0"/></radialGradient><ellipse cx="14" cy="74" rx="20" ry="30" fill="url(#smb2)"/><path d="M8 96 q8 -12 2 -22 q-6 -10 6 -22 M18 98 q7 -10 1 -19 q-5 -8 7 -16 M4 90 q4 -8 0 -16 M12 70 q8 -4 6 -12 q-2 -6 4 -10 M22 88 q5 -6 2 -12" stroke="#ecebcf" stroke-width="0.8" fill="none" opacity="0.38"/><ellipse cx="22" cy="124.5" rx="27" ry="3.4" fill="#2a2a1c"/><path d="M-5 125.5 Q22 131 49 124.5" stroke="#d8d0c4" stroke-width="1" fill="none" opacity="0.8"/><path d="M36 106 q11 -2 10 7 q-1 6 -10 8" stroke="#1c120c" stroke-width="2.4" fill="none"/><path d="M-2 100.5 H36.5 Q36 121 26 124 H-2Z" fill="#2a2a1c"/><ellipse cx="17" cy="100.5" rx="19.5" ry="3.6" fill="#ecebcf" opacity="0.9"/><ellipse cx="17" cy="101" rx="17.5" ry="2.6" fill="#b29a78"/></g></svg><div class="t" style="left:108.00px;top:381.32px;font-size:10.6px;line-height:14px;color:#9c9c8a;letter-spacing:0.3px;">brew and sip</div><div class="t" style="left:108.00px;top:397.82px;font-size:10.6px;line-height:14px;color:#5050d0;letter-spacing:0.3px;">brew&amp;sip.com</div><div class="r" style="left:103px;top:424px;width:147px;height:28px;background:#f7f490;border-radius:12px;"></div><div class="t" style="left:113.50px;top:430.87px;font-size:10.6px;line-height:14px;color:#21125a;letter-spacing:0.29px;">I&#x27;d love that! It&#x27;s this one.</div><div class="r" style="left:37px;top:462px;width:197px;height:28px;background:#8d8de8;border-radius:12px;"></div><div class="t" style="left:48.20px;top:469.02px;font-size:10.6px;line-height:14px;color:#21125a;letter-spacing:0.29px;">Amazing, I&#x27;ll see you there at 2pm?</div><svg style="left:10px;top:465px" width="22" height="22" viewBox="0 0 22 22"><defs><clipPath id="ac"><circle cx="11" cy="11" r="10.6"/></clipPath></defs><g clip-path="url(#ac)"><rect width="22" height="22" fill="#d6d8bc"/><path d="M2 22 Q3 16.5 8 15.5 L11 17.5 L14 15.5 Q19 16.5 20 22Z" fill="#80878c"/><path d="M9.2 13.5 H12.8 V16.5 L11 17.5 L9.2 16.5Z" fill="#b4a684"/><ellipse cx="11" cy="10.6" rx="3.7" ry="4.6" fill="#b4a684"/><path d="M6.8 9.8 C6 5.2 8.2 3.2 11.2 3.3 C14.5 3.4 16.2 5.6 15.2 9.8 C14.8 7.6 13.6 6.8 11 6.9 C8.6 7 7.3 7.8 6.8 9.8Z" fill="#22241c"/><path d="M9.1 12.6 Q11 14.2 12.9 12.6" stroke="#f4f0e4" stroke-width="1" fill="none"/><path d="M8.6 9.9H10M12 9.9H13.4" stroke="#22241c" stroke-width="0.8"/></g></svg><div class="r" style="left:180px;top:500px;width:70px;height:28px;background:#f7f490;border-radius:12px;"></div><div class="t" style="left:190.90px;top:506.72px;font-size:10.6px;line-height:14px;color:#21125a;letter-spacing:0.29px;">Let&#x27;s do it</div><div class="r" style="left:0px;top:515px;width:262px;height:60px;background:#12086a;"></div><svg style="left:11.1px;top:531.5px" width="15" height="15" viewBox="0 0 15 15"><circle cx="7.5" cy="7.5" r="6.4" stroke="#c9b8ff" stroke-width="1.3" fill="none"/><path d="M7.5 4V11M4 7.5H11" stroke="#c9b8ff" stroke-width="1.3"/></svg><svg style="left:37.9px;top:531.5px" width="15" height="15" viewBox="0 0 15 15"><circle cx="7.5" cy="7.5" r="6.4" stroke="#c9b8ff" stroke-width="1.3" fill="none"/><circle cx="5.3" cy="6" r="0.9" fill="#c9b8ff"/><circle cx="9.7" cy="6" r="0.9" fill="#c9b8ff"/><path d="M4.3 8.3 Q7.5 12.5 10.7 8.3Z" fill="#c9b8ff"/></svg><div class="r" style="left:70px;top:521px;width:176px;height:37px;background:#e3e3fb;border-radius:18.5px;"></div><div class="t" style="left:80.30px;top:532.32px;font-size:10.6px;line-height:14px;color:#4a4752;letter-spacing:0.45px;">Write A Message</div></div><div class="r" style="left:1601px;top:527px;width:70px;height:30px;background:transparent;border:2px solid #efbe5c;"></div><div class="a" style="left:1696px;top:28px;width:262px;height:569px;border:2px solid #000;border-radius:0 0 4px 4px;background:#22217a;overflow:hidden;"><div class="r" style="left:0px;top:0px;width:262px;height:43px;background:#140a6a;"></div><svg style="left:15px;top:16.5px" width="8" height="10" viewBox="0 0 8 10"><path d="M6 1L2 5L6 9" stroke="#ffffff" stroke-width="1.5" fill="none"/></svg><div class="t" style="left:37.40px;top:13.02px;font-size:13.8px;line-height:18px;color:#ffffff;">Greg</div><svg style="left:240.5px;top:16.5px" width="6" height="12" viewBox="0 0 6 12"><circle cx="3" cy="1.5" r="1.4" fill="#fff"/><circle cx="3" cy="6" r="1.4" fill="#fff"/><circle cx="3" cy="10.5" r="1.4" fill="#fff"/></svg><div class="r" style="left:37px;top:56px;width:145px;height:29px;background:#8e8ce6;border-radius:12px;"></div><div class="t" style="left:48.20px;top:63.12px;font-size:10.6px;line-height:14px;color:#21125a;letter-spacing:0.29px;">Haha, next time for sure!</div><svg style="left:10px;top:59px" width="22" height="22" viewBox="0 0 22 22"><defs><clipPath id="ac"><circle cx="11" cy="11" r="10.6"/></clipPath></defs><g clip-path="url(#ac)"><rect width="22" height="22" fill="#d6d8bc"/><path d="M2 22 Q3 16.5 8 15.5 L11 17.5 L14 15.5 Q19 16.5 20 22Z" fill="#80878c"/><path d="M9.2 13.5 H12.8 V16.5 L11 17.5 L9.2 16.5Z" fill="#b4a684"/><ellipse cx="11" cy="10.6" rx="3.7" ry="4.6" fill="#b4a684"/><path d="M6.8 9.8 C6 5.2 8.2 3.2 11.2 3.3 C14.5 3.4 16.2 5.6 15.2 9.8 C14.8 7.6 13.6 6.8 11 6.9 C8.6 7 7.3 7.8 6.8 9.8Z" fill="#22241c"/><path d="M9.1 12.6 Q11 14.2 12.9 12.6" stroke="#f4f0e4" stroke-width="1" fill="none"/><path d="M8.6 9.9H10M12 9.9H13.4" stroke="#22241c" stroke-width="0.8"/></g></svg><div class="t" style="left:106.20px;top:99.58px;font-size:11.3px;line-height:15px;color:#e6e09a;">Yesterday</div><div class="r" style="left:37px;top:130px;width:213px;height:45px;background:#8e8ce6;border-radius:12px;"></div><div class="t" style="left:48.20px;top:136.97px;font-size:10.6px;line-height:14px;color:#21125a;letter-spacing:0.29px;">Hey! Should we go to that cafe you</div><div class="t" style="left:48.20px;top:152.07px;font-size:10.6px;line-height:14px;color:#21125a;letter-spacing:0.29px;">mentioned last time?</div><svg style="left:10px;top:141px" width="22" height="22" viewBox="0 0 22 22"><defs><clipPath id="ac"><circle cx="11" cy="11" r="10.6"/></clipPath></defs><g clip-path="url(#ac)"><rect width="22" height="22" fill="#d6d8bc"/><path d="M2 22 Q3 16.5 8 15.5 L11 17.5 L14 15.5 Q19 16.5 20 22Z" fill="#80878c"/><path d="M9.2 13.5 H12.8 V16.5 L11 17.5 L9.2 16.5Z" fill="#b4a684"/><ellipse cx="11" cy="10.6" rx="3.7" ry="4.6" fill="#b4a684"/><path d="M6.8 9.8 C6 5.2 8.2 3.2 11.2 3.3 C14.5 3.4 16.2 5.6 15.2 9.8 C14.8 7.6 13.6 6.8 11 6.9 C8.6 7 7.3 7.8 6.8 9.8Z" fill="#22241c"/><path d="M9.1 12.6 Q11 14.2 12.9 12.6" stroke="#f4f0e4" stroke-width="1" fill="none"/><path d="M8.6 9.9H10M12 9.9H13.4" stroke="#22241c" stroke-width="0.8"/></g></svg><div class="r" style="left:37px;top:191px;width:161px;height:28px;background:#8e8ce6;border-radius:12px;"></div><div class="t" style="left:48.20px;top:197.97px;font-size:10.6px;line-height:14px;color:#21125a;letter-spacing:0.29px;">I forgot what it was called...</div><svg style="left:10px;top:194px" width="22" height="22" viewBox="0 0 22 22"><defs><clipPath id="ac"><circle cx="11" cy="11" r="10.6"/></clipPath></defs><g clip-path="url(#ac)"><rect width="22" height="22" fill="#d6d8bc"/><path d="M2 22 Q3 16.5 8 15.5 L11 17.5 L14 15.5 Q19 16.5 20 22Z" fill="#80878c"/><path d="M9.2 13.5 H12.8 V16.5 L11 17.5 L9.2 16.5Z" fill="#b4a684"/><ellipse cx="11" cy="10.6" rx="3.7" ry="4.6" fill="#b4a684"/><path d="M6.8 9.8 C6 5.2 8.2 3.2 11.2 3.3 C14.5 3.4 16.2 5.6 15.2 9.8 C14.8 7.6 13.6 6.8 11 6.9 C8.6 7 7.3 7.8 6.8 9.8Z" fill="#22241c"/><path d="M9.1 12.6 Q11 14.2 12.9 12.6" stroke="#f4f0e4" stroke-width="1" fill="none"/><path d="M8.6 9.9H10M12 9.9H13.4" stroke="#22241c" stroke-width="0.8"/></g></svg><div class="r" style="left:100px;top:234px;width:150px;height:187px;background:#f4f290;border-radius:14px;"></div><svg style="left:109px;top:243px" width="133" height="133" viewBox="0 0 132 132"><defs><radialGradient id="bgb3" cx="0.6" cy="0.35" r="0.75"><stop offset="0" stop-color="#23231a"/><stop offset="1" stop-color="#0c0d09"/></radialGradient><linearGradient id="tbb3" x1="0" y1="0" x2="0" y2="1"><stop offset="0" stop-color="#0c0d09"/><stop offset="0.25" stop-color="#3e3e34"/><stop offset="1" stop-color="#0c0d09"/></linearGradient><clipPath id="clb3"><rect width="132" height="132" rx="7.5"/></clipPath></defs><g clip-path="url(#clb3)"><rect width="132" height="132" fill="url(#bgb3)"/><rect y="104" width="132" height="28" fill="url(#tbb3)"/><path d="M40 112H132M48 118H132M36 124H132" stroke="#d2d2a0" stroke-width="0.5" opacity="0.12"/><path d="M70 19 q-2.5 -3 0 -6.5 q2.5 -3 0 -6.5 M73.5 19 q-2.5 -3 0 -6.5 q2.5 -3 0 -6.5 M76.5 18 q-2 -2.5 0 -5 q2 -2.5 0 -5" stroke="#ecebcf" stroke-width="0.9" fill="none" opacity="0.9"/><path d="M61.5 22 H83 Q82.5 35.5 72.3 36 Q62 35.5 61.5 22Z" fill="#ecebcf"/><ellipse cx="72.2" cy="22.6" rx="10.5" ry="1.6" fill="#0c0d09" opacity="0.5"/><path d="M82.5 25 q7.5 -1.5 6 4.5 q-1.5 4 -8 6" stroke="#ecebcf" stroke-width="1.3" fill="none"/><rect x="64.5" y="36.4" width="18" height="1.8" rx="0.9" fill="#ecebcf" opacity="0.85"/><path d="M42 29.4 H59 M92 29.4 H109" stroke="#d2d2a0" stroke-width="0.9" opacity="0.75"/><text x="22" y="60" font-family="Liberation Serif" font-style="italic" font-size="28" fill="#d2d2a0" stroke="#d2d2a0" stroke-width="0.7" letter-spacing="-1.6" transform="rotate(-6 50 55)">Brew</text><text x="77" y="58" font-family="Liberation Serif" font-style="italic" font-size="18" fill="#ecebcf">&amp;</text><text x="90" y="53" font-family="Liberation Serif" font-style="italic" font-size="30" fill="#d2d2a0" stroke="#d2d2a0" stroke-width="0.7" letter-spacing="-1.4" transform="rotate(-6 108 48)">Sip</text><path d="M37 62.4 H62 M89 62.4 H103" stroke="#d2d2a0" stroke-width="0.8" opacity="0.8"/><text x="75.3" y="66.3" text-anchor="middle" font-family="Liberation Sans" font-size="7.2" fill="#d2d2a0" letter-spacing="0.6">ONID</text><path d="M49 67.5 Q75 76 101.5 67.5 M55 70 Q75 75 95 70" stroke="#d2d2a0" stroke-width="0.7" fill="none" opacity="0.85"/><circle cx="75.3" cy="73" r="1" fill="#d2d2a0"/><path d="M45 73 Q75 92 106 72" stroke="#d2d2a0" stroke-width="2.6" fill="none" stroke-dasharray="1.8 1.6" opacity="0.55"/><radialGradient id="smb3" cx="0.5" cy="0.5" r="0.5"><stop offset="0" stop-color="#ecebcf" stop-opacity="0.16"/><stop offset="1" stop-color="#ecebcf" stop-opacity="0"/></radialGradient><ellipse cx="14" cy="74" rx="20" ry="30" fill="url(#smb3)"/><path d="M8 96 q8 -12 2 -22 q-6 -10 6 -22 M18 98 q7 -10 1 -19 q-5 -8 7 -16 M4 90 q4 -8 0 -16 M12 70 q8 -4 6 -12 q-2 -6 4 -10 M22 88 q5 -6 2 -12" stroke="#ecebcf" stroke-width="0.8" fill="none" opacity="0.38"/><ellipse cx="22" cy="124.5" rx="27" ry="3.4" fill="#2a2a1c"/><path d="M-5 125.5 Q22 131 49 124.5" stroke="#d8d0c4" stroke-width="1" fill="none" opacity="0.8"/><path d="M36 106 q11 -2 10 7 q-1 6 -10 8" stroke="#1c120c" stroke-width="2.4" fill="none"/><path d="M-2 100.5 H36.5 Q36 121 26 124 H-2Z" fill="#2a2a1c"/><ellipse cx="17" cy="100.5" rx="19.5" ry="3.6" fill="#ecebcf" opacity="0.9"/><ellipse cx="17" cy="101" rx="17.5" ry="2.6" fill="#b29a78"/></g></svg><div class="t" style="left:108.00px;top:381.32px;font-size:10.6px;line-height:14px;color:#9c9c8a;letter-spacing:0.3px;">brew and sip</div><div class="t" style="left:108.00px;top:397.82px;font-size:10.6px;line-height:14px;color:#5050d0;letter-spacing:0.3px;">brew&amp;sip.com</div><div class="r" style="left:103px;top:424px;width:147px;height:28px;background:#f4f290;border-radius:12px;"></div><div class="t" style="left:113.50px;top:430.87px;font-size:10.6px;line-height:14px;color:#21125a;letter-spacing:0.29px;">I&#x27;d love that! It&#x27;s this one.</div><div class="r" style="left:37px;top:462px;width:197px;height:28px;background:#8e8ce6;border-radius:12px;"></div><div class="t" style="left:48.20px;top:469.02px;font-size:10.6px;line-height:14px;color:#21125a;letter-spacing:0.29px;">Amazing, I&#x27;ll see you there at 2pm?</div><svg style="left:10px;top:465px" width="22" height="22" viewBox="0 0 22 22"><defs><clipPath id="ac"><circle cx="11" cy="11" r="10.6"/></clipPath></defs><g clip-path="url(#ac)"><rect width="22" height="22" fill="#d6d8bc"/><path d="M2 22 Q3 16.5 8 15.5 L11 17.5 L14 15.5 Q19 16.5 20 22Z" fill="#80878c"/><path d="M9.2 13.5 H12.8 V16.5 L11 17.5 L9.2 16.5Z" fill="#b4a684"/><ellipse cx="11" cy="10.6" rx="3.7" ry="4.6" fill="#b4a684"/><path d="M6.8 9.8 C6 5.2 8.2 3.2 11.2 3.3 C14.5 3.4 16.2 5.6 15.2 9.8 C14.8 7.6 13.6 6.8 11 6.9 C8.6 7 7.3 7.8 6.8 9.8Z" fill="#22241c"/><path d="M9.1 12.6 Q11 14.2 12.9 12.6" stroke="#f4f0e4" stroke-width="1" fill="none"/><path d="M8.6 9.9H10M12 9.9H13.4" stroke="#22241c" stroke-width="0.8"/></g></svg><div class="r" style="left:180px;top:500px;width:70px;height:28px;background:#f4f290;border-radius:12px;"></div><div class="t" style="left:190.90px;top:506.72px;font-size:10.6px;line-height:14px;color:#21125a;letter-spacing:0.29px;">Let&#x27;s do it</div><div class="r" style="left:0px;top:515px;width:262px;height:60px;background:#15086a;"></div><svg style="left:11.1px;top:531.5px" width="15" height="15" viewBox="0 0 15 15"><circle cx="7.5" cy="7.5" r="6.4" stroke="#c9b8ff" stroke-width="1.3" fill="none"/><path d="M7.5 4V11M4 7.5H11" stroke="#c9b8ff" stroke-width="1.3"/></svg><svg style="left:37.9px;top:531.5px" width="15" height="15" viewBox="0 0 15 15"><circle cx="7.5" cy="7.5" r="6.4" stroke="#c9b8ff" stroke-width="1.3" fill="none"/><circle cx="5.3" cy="6" r="0.9" fill="#c9b8ff"/><circle cx="9.7" cy="6" r="0.9" fill="#c9b8ff"/><path d="M4.3 8.3 Q7.5 12.5 10.7 8.3Z" fill="#c9b8ff"/></svg><div class="r" style="left:70px;top:521px;width:176px;height:37px;background:#e3e3fb;border-radius:18.5px;"></div><div class="t" style="left:80.30px;top:532.32px;font-size:10.6px;line-height:14px;color:#4a4752;letter-spacing:0.45px;">Write A Message</div></div><div class="r" style="left:1877px;top:527px;width:70px;height:30px;background:transparent;border:2px solid #efbe5c;"></div><div class="a" style="left:1972px;top:28px;width:262px;height:569px;border:2px solid #000;border-radius:0 0 4px 4px;background:#22217a;overflow:hidden;"><div class="r" style="left:0px;top:0px;width:262px;height:43px;background:#140a6a;"></div><svg style="left:15px;top:16.5px" width="8" height="10" viewBox="0 0 8 10"><path d="M6 1L2 5L6 9" stroke="#ffffff" stroke-width="1.5" fill="none"/></svg><div class="t" style="left:37.40px;top:13.02px;font-size:13.8px;line-height:18px;color:#ffffff;">Greg</div><svg style="left:240.5px;top:16.5px" width="6" height="12" viewBox="0 0 6 12"><circle cx="3" cy="1.5" r="1.4" fill="#fff"/><circle cx="3" cy="6" r="1.4" fill="#fff"/><circle cx="3" cy="10.5" r="1.4" fill="#fff"/></svg><div class="r" style="left:37px;top:56px;width:145px;height:29px;background:#8e8ce6;border-radius:12px;"></div><div class="t" style="left:48.20px;top:63.12px;font-size:10.6px;line-height:14px;color:#21125a;letter-spacing:0.29px;">Haha, next time for sure!</div><svg style="left:10px;top:59px" width="22" height="22" viewBox="0 0 22 22"><defs><clipPath id="ac"><circle cx="11" cy="11" r="10.6"/></clipPath></defs><g clip-path="url(#ac)"><rect width="22" height="22" fill="#d6d8bc"/><path d="M2 22 Q3 16.5 8 15.5 L11 17.5 L14 15.5 Q19 16.5 20 22Z" fill="#80878c"/><path d="M9.2 13.5 H12.8 V16.5 L11 17.5 L9.2 16.5Z" fill="#b4a684"/><ellipse cx="11" cy="10.6" rx="3.7" ry="4.6" fill="#b4a684"/><path d="M6.8 9.8 C6 5.2 8.2 3.2 11.2 3.3 C14.5 3.4 16.2 5.6 15.2 9.8 C14.8 7.6 13.6 6.8 11 6.9 C8.6 7 7.3 7.8 6.8 9.8Z" fill="#22241c"/><path d="M9.1 12.6 Q11 14.2 12.9 12.6" stroke="#f4f0e4" stroke-width="1" fill="none"/><path d="M8.6 9.9H10M12 9.9H13.4" stroke="#22241c" stroke-width="0.8"/></g></svg><div class="t" style="left:106.20px;top:99.58px;font-size:11.3px;line-height:15px;color:#e6e09a;">Yesterday</div><div class="r" style="left:37px;top:130px;width:213px;height:45px;background:#8e8ce6;border-radius:12px;"></div><div class="t" style="left:48.20px;top:136.97px;font-size:10.6px;line-height:14px;color:#21125a;letter-spacing:0.29px;">Hey! Should we go to that cafe you</div><div class="t" style="left:48.20px;top:152.07px;font-size:10.6px;line-height:14px;color:#21125a;letter-spacing:0.29px;">mentioned last time?</div><svg style="left:10px;top:141px" width="22" height="22" viewBox="0 0 22 22"><defs><clipPath id="ac"><circle cx="11" cy="11" r="10.6"/></clipPath></defs><g clip-path="url(#ac)"><rect width="22" height="22" fill="#d6d8bc"/><path d="M2 22 Q3 16.5 8 15.5 L11 17.5 L14 15.5 Q19 16.5 20 22Z" fill="#80878c"/><path d="M9.2 13.5 H12.8 V16.5 L11 17.5 L9.2 16.5Z" fill="#b4a684"/><ellipse cx="11" cy="10.6" rx="3.7" ry="4.6" fill="#b4a684"/><path d="M6.8 9.8 C6 5.2 8.2 3.2 11.2 3.3 C14.5 3.4 16.2 5.6 15.2 9.8 C14.8 7.6 13.6 6.8 11 6.9 C8.6 7 7.3 7.8 6.8 9.8Z" fill="#22241c"/><path d="M9.1 12.6 Q11 14.2 12.9 12.6" stroke="#f4f0e4" stroke-width="1" fill="none"/><path d="M8.6 9.9H10M12 9.9H13.4" stroke="#22241c" stroke-width="0.8"/></g></svg><div class="r" style="left:37px;top:191px;width:161px;height:28px;background:#8e8ce6;border-radius:12px;"></div><div class="t" style="left:48.20px;top:197.97px;font-size:10.6px;line-height:14px;color:#21125a;letter-spacing:0.29px;">I forgot what it was called...</div><svg style="left:10px;top:194px" width="22" height="22" viewBox="0 0 22 22"><defs><clipPath id="ac"><circle cx="11" cy="11" r="10.6"/></clipPath></defs><g clip-path="url(#ac)"><rect width="22" height="22" fill="#d6d8bc"/><path d="M2 22 Q3 16.5 8 15.5 L11 17.5 L14 15.5 Q19 16.5 20 22Z" fill="#80878c"/><path d="M9.2 13.5 H12.8 V16.5 L11 17.5 L9.2 16.5Z" fill="#b4a684"/><ellipse cx="11" cy="10.6" rx="3.7" ry="4.6" fill="#b4a684"/><path d="M6.8 9.8 C6 5.2 8.2 3.2 11.2 3.3 C14.5 3.4 16.2 5.6 15.2 9.8 C14.8 7.6 13.6 6.8 11 6.9 C8.6 7 7.3 7.8 6.8 9.8Z" fill="#22241c"/><path d="M9.1 12.6 Q11 14.2 12.9 12.6" stroke="#f4f0e4" stroke-width="1" fill="none"/><path d="M8.6 9.9H10M12 9.9H13.4" stroke="#22241c" stroke-width="0.8"/></g></svg><div class="r" style="left:100px;top:234px;width:150px;height:187px;background:#f4f290;border-radius:14px;"></div><svg style="left:109px;top:243px" width="133" height="133" viewBox="0 0 132 132"><defs><radialGradient id="bgb4" cx="0.6" cy="0.35" r="0.75"><stop offset="0" stop-color="#23231a"/><stop offset="1" stop-color="#0c0d09"/></radialGradient><linearGradient id="tbb4" x1="0" y1="0" x2="0" y2="1"><stop offset="0" stop-color="#0c0d09"/><stop offset="0.25" stop-color="#3e3e34"/><stop offset="1" stop-color="#0c0d09"/></linearGradient><clipPath id="clb4"><rect width="132" height="132" rx="7.5"/></clipPath></defs><g clip-path="url(#clb4)"><rect width="132" height="132" fill="url(#bgb4)"/><rect y="104" width="132" height="28" fill="url(#tbb4)"/><path d="M40 112H132M48 118H132M36 124H132" stroke="#d2d2a0" stroke-width="0.5" opacity="0.12"/><path d="M70 19 q-2.5 -3 0 -6.5 q2.5 -3 0 -6.5 M73.5 19 q-2.5 -3 0 -6.5 q2.5 -3 0 -6.5 M76.5 18 q-2 -2.5 0 -5 q2 -2.5 0 -5" stroke="#ecebcf" stroke-width="0.9" fill="none" opacity="0.9"/><path d="M61.5 22 H83 Q82.5 35.5 72.3 36 Q62 35.5 61.5 22Z" fill="#ecebcf"/><ellipse cx="72.2" cy="22.6" rx="10.5" ry="1.6" fill="#0c0d09" opacity="0.5"/><path d="M82.5 25 q7.5 -1.5 6 4.5 q-1.5 4 -8 6" stroke="#ecebcf" stroke-width="1.3" fill="none"/><rect x="64.5" y="36.4" width="18" height="1.8" rx="0.9" fill="#ecebcf" opacity="0.85"/><path d="M42 29.4 H59 M92 29.4 H109" stroke="#d2d2a0" stroke-width="0.9" opacity="0.75"/><text x="22" y="60" font-family="Liberation Serif" font-style="italic" font-size="28" fill="#d2d2a0" stroke="#d2d2a0" stroke-width="0.7" letter-spacing="-1.6" transform="rotate(-6 50 55)">Brew</text><text x="77" y="58" font-family="Liberation Serif" font-style="italic" font-size="18" fill="#ecebcf">&amp;</text><text x="90" y="53" font-family="Liberation Serif" font-style="italic" font-size="30" fill="#d2d2a0" stroke="#d2d2a0" stroke-width="0.7" letter-spacing="-1.4" transform="rotate(-6 108 48)">Sip</text><path d="M37 62.4 H62 M89 62.4 H103" stroke="#d2d2a0" stroke-width="0.8" opacity="0.8"/><text x="75.3" y="66.3" text-anchor="middle" font-family="Liberation Sans" font-size="7.2" fill="#d2d2a0" letter-spacing="0.6">ONID</text><path d="M49 67.5 Q75 76 101.5 67.5 M55 70 Q75 75 95 70" stroke="#d2d2a0" stroke-width="0.7" fill="none" opacity="0.85"/><circle cx="75.3" cy="73" r="1" fill="#d2d2a0"/><path d="M45 73 Q75 92 106 72" stroke="#d2d2a0" stroke-width="2.6" fill="none" stroke-dasharray="1.8 1.6" opacity="0.55"/><radialGradient id="smb4" cx="0.5" cy="0.5" r="0.5"><stop offset="0" stop-color="#ecebcf" stop-opacity="0.16"/><stop offset="1" stop-color="#ecebcf" stop-opacity="0"/></radialGradient><ellipse cx="14" cy="74" rx="20" ry="30" fill="url(#smb4)"/><path d="M8 96 q8 -12 2 -22 q-6 -10 6 -22 M18 98 q7 -10 1 -19 q-5 -8 7 -16 M4 90 q4 -8 0 -16 M12 70 q8 -4 6 -12 q-2 -6 4 -10 M22 88 q5 -6 2 -12" stroke="#ecebcf" stroke-width="0.8" fill="none" opacity="0.38"/><ellipse cx="22" cy="124.5" rx="27" ry="3.4" fill="#2a2a1c"/><path d="M-5 125.5 Q22 131 49 124.5" stroke="#d8d0c4" stroke-width="1" fill="none" opacity="0.8"/><path d="M36 106 q11 -2 10 7 q-1 6 -10 8" stroke="#1c120c" stroke-width="2.4" fill="none"/><path d="M-2 100.5 H36.5 Q36 121 26 124 H-2Z" fill="#2a2a1c"/><ellipse cx="17" cy="100.5" rx="19.5" ry="3.6" fill="#ecebcf" opacity="0.9"/><ellipse cx="17" cy="101" rx="17.5" ry="2.6" fill="#b29a78"/></g></svg><div class="t" style="left:108.00px;top:381.32px;font-size:10.6px;line-height:14px;color:#9c9c8a;letter-spacing:0.3px;">brew and sip</div><div class="t" style="left:108.00px;top:397.82px;font-size:10.6px;line-height:14px;color:#5050d0;letter-spacing:0.3px;">brew&amp;sip.com</div><div class="r" style="left:103px;top:424px;width:147px;height:28px;background:#f4f290;border-radius:12px;"></div><div class="t" style="left:113.50px;top:430.87px;font-size:10.6px;line-height:14px;color:#21125a;letter-spacing:0.29px;">I&#x27;d love that! It&#x27;s this one.</div><div class="r" style="left:37px;top:462px;width:197px;height:28px;background:#8e8ce6;border-radius:12px;"></div><div class="t" style="left:48.20px;top:469.02px;font-size:10.6px;line-height:14px;color:#21125a;letter-spacing:0.29px;">Amazing, I&#x27;ll see you there at 2pm?</div><svg style="left:10px;top:465px" width="22" height="22" viewBox="0 0 22 22"><defs><clipPath id="ac"><circle cx="11" cy="11" r="10.6"/></clipPath></defs><g clip-path="url(#ac)"><rect width="22" height="22" fill="#d6d8bc"/><path d="M2 22 Q3 16.5 8 15.5 L11 17.5 L14 15.5 Q19 16.5 20 22Z" fill="#80878c"/><path d="M9.2 13.5 H12.8 V16.5 L11 17.5 L9.2 16.5Z" fill="#b4a684"/><ellipse cx="11" cy="10.6" rx="3.7" ry="4.6" fill="#b4a684"/><path d="M6.8 9.8 C6 5.2 8.2 3.2 11.2 3.3 C14.5 3.4 16.2 5.6 15.2 9.8 C14.8 7.6 13.6 6.8 11 6.9 C8.6 7 7.3 7.8 6.8 9.8Z" fill="#22241c"/><path d="M9.1 12.6 Q11 14.2 12.9 12.6" stroke="#f4f0e4" stroke-width="1" fill="none"/><path d="M8.6 9.9H10M12 9.9H13.4" stroke="#22241c" stroke-width="0.8"/></g></svg><div class="r" style="left:180px;top:500px;width:70px;height:28px;background:#f4f290;border-radius:12px;"></div><div class="t" style="left:190.90px;top:506.72px;font-size:10.6px;line-height:14px;color:#21125a;letter-spacing:0.29px;">Let&#x27;s do it</div><div class="r" style="left:0px;top:515px;width:262px;height:60px;background:#15086a;"></div><svg style="left:11.1px;top:531.5px" width="15" height="15" viewBox="0 0 15 15"><circle cx="7.5" cy="7.5" r="6.4" stroke="#c9b8ff" stroke-width="1.3" fill="none"/><path d="M7.5 4V11M4 7.5H11" stroke="#c9b8ff" stroke-width="1.3"/></svg><svg style="left:37.9px;top:531.5px" width="15" height="15" viewBox="0 0 15 15"><circle cx="7.5" cy="7.5" r="6.4" stroke="#c9b8ff" stroke-width="1.3" fill="none"/><circle cx="5.3" cy="6" r="0.9" fill="#c9b8ff"/><circle cx="9.7" cy="6" r="0.9" fill="#c9b8ff"/><path d="M4.3 8.3 Q7.5 12.5 10.7 8.3Z" fill="#c9b8ff"/></svg><div class="r" style="left:70px;top:521px;width:176px;height:37px;background:#e3e3fb;border-radius:18.5px;"></div><div class="t" style="left:80.30px;top:532.32px;font-size:10.6px;line-height:14px;color:#4a4752;letter-spacing:0.45px;">Write A Message</div></div><div class="r" style="left:2153px;top:527px;width:70px;height:30px;background:transparent;border:2px solid #efbe5c;"></div><div class="a" style="left:1144px;top:668px;width:262px;height:569px;border:2px solid #000;border-radius:0 0 4px 4px;background:#26217a;overflow:hidden;"><div class="r" style="left:0px;top:0px;width:262px;height:43px;background:#140a62;"></div><svg style="left:15px;top:16.5px" width="8" height="10" viewBox="0 0 8 10"><path d="M6 1L2 5L6 9" stroke="#ffffff" stroke-width="1.5" fill="none"/></svg><div class="t" style="left:37.40px;top:13.02px;font-size:13.8px;line-height:18px;color:#ffffff;">Greg</div><svg style="left:240.5px;top:16.5px" width="6" height="12" viewBox="0 0 6 12"><circle cx="3" cy="1.5" r="1.4" fill="#fff"/><circle cx="3" cy="6" r="1.4" fill="#fff"/><circle cx="3" cy="10.5" r="1.4" fill="#fff"/></svg><div class="r" style="left:37px;top:56px;width:145px;height:29px;background:#8f8ae6;border-radius:12px;"></div><div class="t" style="left:48.20px;top:63.12px;font-size:10.6px;line-height:14px;color:#21125a;letter-spacing:0.29px;">Haha, next time for sure!</div><svg style="left:10px;top:59px" width="22" height="22" viewBox="0 0 22 22"><defs><clipPath id="ac"><circle cx="11" cy="11" r="10.6"/></clipPath></defs><g clip-path="url(#ac)"><rect width="22" height="22" fill="#d6d8bc"/><path d="M2 22 Q3 16.5 8 15.5 L11 17.5 L14 15.5 Q19 16.5 20 22Z" fill="#80878c"/><path d="M9.2 13.5 H12.8 V16.5 L11 17.5 L9.2 16.5Z" fill="#b4a684"/><ellipse cx="11" cy="10.6" rx="3.7" ry="4.6" fill="#b4a684"/><path d="M6.8 9.8 C6 5.2 8.2 3.2 11.2 3.3 C14.5 3.4 16.2 5.6 15.2 9.8 C14.8 7.6 13.6 6.8 11 6.9 C8.6 7 7.3 7.8 6.8 9.8Z" fill="#22241c"/><path d="M9.1 12.6 Q11 14.2 12.9 12.6" stroke="#f4f0e4" stroke-width="1" fill="none"/><path d="M8.6 9.9H10M12 9.9H13.4" stroke="#22241c" stroke-width="0.8"/></g></svg><div class="t" style="left:106.20px;top:99.58px;font-size:11.3px;line-height:15px;color:#e8e39a;">Yesterday</div><div class="r" style="left:37px;top:130px;width:213px;height:45px;background:#8f8ae6;border-radius:12px;"></div><div class="t" style="left:48.20px;top:136.97px;font-size:10.6px;line-height:14px;color:#21125a;letter-spacing:0.29px;">Hey! Should we go to that cafe you</div><div class="t" style="left:48.20px;top:152.07px;font-size:10.6px;line-height:14px;color:#21125a;letter-spacing:0.29px;">mentioned last time?</div><svg style="left:10px;top:141px" width="22" height="22" viewBox="0 0 22 22"><defs><clipPath id="ac"><circle cx="11" cy="11" r="10.6"/></clipPath></defs><g clip-path="url(#ac)"><rect width="22" height="22" fill="#d6d8bc"/><path d="M2 22 Q3 16.5 8 15.5 L11 17.5 L14 15.5 Q19 16.5 20 22Z" fill="#80878c"/><path d="M9.2 13.5 H12.8 V16.5 L11 17.5 L9.2 16.5Z" fill="#b4a684"/><ellipse cx="11" cy="10.6" rx="3.7" ry="4.6" fill="#b4a684"/><path d="M6.8 9.8 C6 5.2 8.2 3.2 11.2 3.3 C14.5 3.4 16.2 5.6 15.2 9.8 C14.8 7.6 13.6 6.8 11 6.9 C8.6 7 7.3 7.8 6.8 9.8Z" fill="#22241c"/><path d="M9.1 12.6 Q11 14.2 12.9 12.6" stroke="#f4f0e4" stroke-width="1" fill="none"/><path d="M8.6 9.9H10M12 9.9H13.4" stroke="#22241c" stroke-width="0.8"/></g></svg><div class="r" style="left:37px;top:191px;width:161px;height:28px;background:#8f8ae6;border-radius:12px;"></div><div class="t" style="left:48.20px;top:197.97px;font-size:10.6px;line-height:14px;color:#21125a;letter-spacing:0.29px;">I forgot what it was called...</div><svg style="left:10px;top:194px" width="22" height="22" viewBox="0 0 22 22"><defs><clipPath id="ac"><circle cx="11" cy="11" r="10.6"/></clipPath></defs><g clip-path="url(#ac)"><rect width="22" height="22" fill="#d6d8bc"/><path d="M2 22 Q3 16.5 8 15.5 L11 17.5 L14 15.5 Q19 16.5 20 22Z" fill="#80878c"/><path d="M9.2 13.5 H12.8 V16.5 L11 17.5 L9.2 16.5Z" fill="#b4a684"/><ellipse cx="11" cy="10.6" rx="3.7" ry="4.6" fill="#b4a684"/><path d="M6.8 9.8 C6 5.2 8.2 3.2 11.2 3.3 C14.5 3.4 16.2 5.6 15.2 9.8 C14.8 7.6 13.6 6.8 11 6.9 C8.6 7 7.3 7.8 6.8 9.8Z" fill="#22241c"/><path d="M9.1 12.6 Q11 14.2 12.9 12.6" stroke="#f4f0e4" stroke-width="1" fill="none"/><path d="M8.6 9.9H10M12 9.9H13.4" stroke="#22241c" stroke-width="0.8"/></g></svg><div class="r" style="left:100px;top:234px;width:150px;height:187px;background:#f2f28a;border-radius:14px;"></div><svg style="left:109px;top:243px" width="133" height="133" viewBox="0 0 132 132"><defs><radialGradient id="bgb5" cx="0.6" cy="0.35" r="0.75"><stop offset="0" stop-color="#23231a"/><stop offset="1" stop-color="#0c0d09"/></radialGradient><linearGradient id="tbb5" x1="0" y1="0" x2="0" y2="1"><stop offset="0" stop-color="#0c0d09"/><stop offset="0.25" stop-color="#3e3e34"/><stop offset="1" stop-color="#0c0d09"/></linearGradient><clipPath id="clb5"><rect width="132" height="132" rx="7.5"/></clipPath></defs><g clip-path="url(#clb5)"><rect width="132" height="132" fill="url(#bgb5)"/><rect y="104" width="132" height="28" fill="url(#tbb5)"/><path d="M40 112H132M48 118H132M36 124H132" stroke="#d2d2a0" stroke-width="0.5" opacity="0.12"/><path d="M70 19 q-2.5 -3 0 -6.5 q2.5 -3 0 -6.5 M73.5 19 q-2.5 -3 0 -6.5 q2.5 -3 0 -6.5 M76.5 18 q-2 -2.5 0 -5 q2 -2.5 0 -5" stroke="#ecebcf" stroke-width="0.9" fill="none" opacity="0.9"/><path d="M61.5 22 H83 Q82.5 35.5 72.3 36 Q62 35.5 61.5 22Z" fill="#ecebcf"/><ellipse cx="72.2" cy="22.6" rx="10.5" ry="1.6" fill="#0c0d09" opacity="0.5"/><path d="M82.5 25 q7.5 -1.5 6 4.5 q-1.5 4 -8 6" stroke="#ecebcf" stroke-width="1.3" fill="none"/><rect x="64.5" y="36.4" width="18" height="1.8" rx="0.9" fill="#ecebcf" opacity="0.85"/><path d="M42 29.4 H59 M92 29.4 H109" stroke="#d2d2a0" stroke-width="0.9" opacity="0.75"/><text x="22" y="60" font-family="Liberation Serif" font-style="italic" font-size="28" fill="#d2d2a0" stroke="#d2d2a0" stroke-width="0.7" letter-spacing="-1.6" transform="rotate(-6 50 55)">Brew</text><text x="77" y="58" font-family="Liberation Serif" font-style="italic" font-size="18" fill="#ecebcf">&amp;</text><text x="90" y="53" font-family="Liberation Serif" font-style="italic" font-size="30" fill="#d2d2a0" stroke="#d2d2a0" stroke-width="0.7" letter-spacing="-1.4" transform="rotate(-6 108 48)">Sip</text><path d="M37 62.4 H62 M89 62.4 H103" stroke="#d2d2a0" stroke-width="0.8" opacity="0.8"/><text x="75.3" y="66.3" text-anchor="middle" font-family="Liberation Sans" font-size="7.2" fill="#d2d2a0" letter-spacing="0.6">ONID</text><path d="M49 67.5 Q75 76 101.5 67.5 M55 70 Q75 75 95 70" stroke="#d2d2a0" stroke-width="0.7" fill="none" opacity="0.85"/><circle cx="75.3" cy="73" r="1" fill="#d2d2a0"/><path d="M45 73 Q75 92 106 72" stroke="#d2d2a0" stroke-width="2.6" fill="none" stroke-dasharray="1.8 1.6" opacity="0.55"/><radialGradient id="smb5" cx="0.5" cy="0.5" r="0.5"><stop offset="0" stop-color="#ecebcf" stop-opacity="0.16"/><stop offset="1" stop-color="#ecebcf" stop-opacity="0"/></radialGradient><ellipse cx="14" cy="74" rx="20" ry="30" fill="url(#smb5)"/><path d="M8 96 q8 -12 2 -22 q-6 -10 6 -22 M18 98 q7 -10 1 -19 q-5 -8 7 -16 M4 90 q4 -8 0 -16 M12 70 q8 -4 6 -12 q-2 -6 4 -10 M22 88 q5 -6 2 -12" stroke="#ecebcf" stroke-width="0.8" fill="none" opacity="0.38"/><ellipse cx="22" cy="124.5" rx="27" ry="3.4" fill="#2a2a1c"/><path d="M-5 125.5 Q22 131 49 124.5" stroke="#d8d0c4" stroke-width="1" fill="none" opacity="0.8"/><path d="M36 106 q11 -2 10 7 q-1 6 -10 8" stroke="#1c120c" stroke-width="2.4" fill="none"/><path d="M-2 100.5 H36.5 Q36 121 26 124 H-2Z" fill="#2a2a1c"/><ellipse cx="17" cy="100.5" rx="19.5" ry="3.6" fill="#ecebcf" opacity="0.9"/><ellipse cx="17" cy="101" rx="17.5" ry="2.6" fill="#b29a78"/></g></svg><div class="t" style="left:108.00px;top:381.32px;font-size:10.6px;line-height:14px;color:#9c9c8a;letter-spacing:0.3px;">brew and sip</div><div class="t" style="left:108.00px;top:397.82px;font-size:10.6px;line-height:14px;color:#5050d0;letter-spacing:0.3px;">brew&amp;sip.com</div><div class="r" style="left:103px;top:424px;width:147px;height:28px;background:#f2f28a;border-radius:12px;"></div><div class="t" style="left:113.50px;top:430.87px;font-size:10.6px;line-height:14px;color:#21125a;letter-spacing:0.29px;">I&#x27;d love that! It&#x27;s this one.</div><div class="r" style="left:37px;top:462px;width:197px;height:28px;background:#8f8ae6;border-radius:12px;"></div><div class="t" style="left:48.20px;top:469.02px;font-size:10.6px;line-height:14px;color:#21125a;letter-spacing:0.29px;">Amazing, I&#x27;ll see you there at 2pm?</div><svg style="left:10px;top:465px" width="22" height="22" viewBox="0 0 22 22"><defs><clipPath id="ac"><circle cx="11" cy="11" r="10.6"/></clipPath></defs><g clip-path="url(#ac)"><rect width="22" height="22" fill="#d6d8bc"/><path d="M2 22 Q3 16.5 8 15.5 L11 17.5 L14 15.5 Q19 16.5 20 22Z" fill="#80878c"/><path d="M9.2 13.5 H12.8 V16.5 L11 17.5 L9.2 16.5Z" fill="#b4a684"/><ellipse cx="11" cy="10.6" rx="3.7" ry="4.6" fill="#b4a684"/><path d="M6.8 9.8 C6 5.2 8.2 3.2 11.2 3.3 C14.5 3.4 16.2 5.6 15.2 9.8 C14.8 7.6 13.6 6.8 11 6.9 C8.6 7 7.3 7.8 6.8 9.8Z" fill="#22241c"/><path d="M9.1 12.6 Q11 14.2 12.9 12.6" stroke="#f4f0e4" stroke-width="1" fill="none"/><path d="M8.6 9.9H10M12 9.9H13.4" stroke="#22241c" stroke-width="0.8"/></g></svg><div class="r" style="left:180px;top:500px;width:70px;height:28px;background:#f2f28a;border-radius:12px;"></div><div class="t" style="left:190.90px;top:506.72px;font-size:10.6px;line-height:14px;color:#21125a;letter-spacing:0.29px;">Let&#x27;s do it</div><div class="r" style="left:0px;top:515px;width:262px;height:60px;background:#15086a;"></div><svg style="left:11.1px;top:531.5px" width="15" height="15" viewBox="0 0 15 15"><circle cx="7.5" cy="7.5" r="6.4" stroke="#c9b8ff" stroke-width="1.3" fill="none"/><path d="M7.5 4V11M4 7.5H11" stroke="#c9b8ff" stroke-width="1.3"/></svg><svg style="left:37.9px;top:531.5px" width="15" height="15" viewBox="0 0 15 15"><circle cx="7.5" cy="7.5" r="6.4" stroke="#c9b8ff" stroke-width="1.3" fill="none"/><circle cx="5.3" cy="6" r="0.9" fill="#c9b8ff"/><circle cx="9.7" cy="6" r="0.9" fill="#c9b8ff"/><path d="M4.3 8.3 Q7.5 12.5 10.7 8.3Z" fill="#c9b8ff"/></svg><div class="r" style="left:70px;top:521px;width:176px;height:37px;background:#e3e3fb;border-radius:18.5px;"></div><div class="t" style="left:80.30px;top:532.32px;font-size:10.6px;line-height:14px;color:#4a4752;letter-spacing:0.45px;">Write A Message</div></div><div class="r" style="left:1325px;top:1167px;width:70px;height:30px;background:transparent;border:2px solid #efbe5c;"></div><div class="a" style="left:1420px;top:668px;width:262px;height:569px;border:2px solid #000;border-radius:0 0 4px 4px;background:#1f3534;overflow:hidden;"><div class="r" style="left:0px;top:0px;width:262px;height:43px;background:#0f2626;"></div><svg style="left:15px;top:16.5px" width="8" height="10" viewBox="0 0 8 10"><path d="M6 1L2 5L6 9" stroke="#ffffff" stroke-width="1.5" fill="none"/></svg><div class="t" style="left:37.40px;top:13.02px;font-size:13.8px;line-height:18px;color:#ffffff;">Greg</div><svg style="left:240.5px;top:16.5px" width="6" height="12" viewBox="0 0 6 12"><circle cx="3" cy="1.5" r="1.4" fill="#fff"/><circle cx="3" cy="6" r="1.4" fill="#fff"/><circle cx="3" cy="10.5" r="1.4" fill="#fff"/></svg><div class="r" style="left:37px;top:56px;width:145px;height:29px;background:#8fa09c;border-radius:12px;"></div><div class="t" style="left:48.20px;top:63.12px;font-size:10.6px;line-height:14px;color:#1c2624;letter-spacing:0.29px;">Haha, next time for sure!</div><svg style="left:10px;top:59px" width="22" height="22" viewBox="0 0 22 22"><defs><clipPath id="ac"><circle cx="11" cy="11" r="10.6"/></clipPath></defs><g clip-path="url(#ac)"><rect width="22" height="22" fill="#ddd0cc"/><path d="M2 22 Q3 16.5 8 15.5 L11 17.5 L14 15.5 Q19 16.5 20 22Z" fill="#7e8a88"/><path d="M9.2 13.5 H12.8 V16.5 L11 17.5 L9.2 16.5Z" fill="#c09a8e"/><ellipse cx="11" cy="10.6" rx="3.7" ry="4.6" fill="#c09a8e"/><path d="M6.8 9.8 C6 5.2 8.2 3.2 11.2 3.3 C14.5 3.4 16.2 5.6 15.2 9.8 C14.8 7.6 13.6 6.8 11 6.9 C8.6 7 7.3 7.8 6.8 9.8Z" fill="#2a201e"/><path d="M9.1 12.6 Q11 14.2 12.9 12.6" stroke="#f4f0e4" stroke-width="1" fill="none"/><path d="M8.6 9.9H10M12 9.9H13.4" stroke="#2a201e" stroke-width="0.8"/></g></svg><div class="t" style="left:106.20px;top:99.58px;font-size:11.3px;line-height:15px;color:#e6f0ee;">Yesterday</div><div class="r" style="left:37px;top:130px;width:213px;height:45px;background:#8fa09c;border-radius:12px;"></div><div class="t" style="left:48.20px;top:136.97px;font-size:10.6px;line-height:14px;color:#1c2624;letter-spacing:0.29px;">Hey! Should we go to that cafe you</div><div class="t" style="left:48.20px;top:152.07px;font-size:10.6px;line-height:14px;color:#1c2624;letter-spacing:0.29px;">mentioned last time?</div><svg style="left:10px;top:141px" width="22" height="22" viewBox="0 0 22 22"><defs><clipPath id="ac"><circle cx="11" cy="11" r="10.6"/></clipPath></defs><g clip-path="url(#ac)"><rect width="22" height="22" fill="#ddd0cc"/><path d="M2 22 Q3 16.5 8 15.5 L11 17.5 L14 15.5 Q19 16.5 20 22Z" fill="#7e8a88"/><path d="M9.2 13.5 H12.8 V16.5 L11 17.5 L9.2 16.5Z" fill="#c09a8e"/><ellipse cx="11" cy="10.6" rx="3.7" ry="4.6" fill="#c09a8e"/><path d="M6.8 9.8 C6 5.2 8.2 3.2 11.2 3.3 C14.5 3.4 16.2 5.6 15.2 9.8 C14.8 7.6 13.6 6.8 11 6.9 C8.6 7 7.3 7.8 6.8 9.8Z" fill="#2a201e"/><path d="M9.1 12.6 Q11 14.2 12.9 12.6" stroke="#f4f0e4" stroke-width="1" fill="none"/><path d="M8.6 9.9H10M12 9.9H13.4" stroke="#2a201e" stroke-width="0.8"/></g></svg><div class="r" style="left:37px;top:191px;width:161px;height:28px;background:#8fa09c;border-radius:12px;"></div><div class="t" style="left:48.20px;top:197.97px;font-size:10.6px;line-height:14px;color:#1c2624;letter-spacing:0.29px;">I forgot what it was called...</div><svg style="left:10px;top:194px" width="22" height="22" viewBox="0 0 22 22"><defs><clipPath id="ac"><circle cx="11" cy="11" r="10.6"/></clipPath></defs><g clip-path="url(#ac)"><rect width="22" height="22" fill="#ddd0cc"/><path d="M2 22 Q3 16.5 8 15.5 L11 17.5 L14 15.5 Q19 16.5 20 22Z" fill="#7e8a88"/><path d="M9.2 13.5 H12.8 V16.5 L11 17.5 L9.2 16.5Z" fill="#c09a8e"/><ellipse cx="11" cy="10.6" rx="3.7" ry="4.6" fill="#c09a8e"/><path d="M6.8 9.8 C6 5.2 8.2 3.2 11.2 3.3 C14.5 3.4 16.2 5.6 15.2 9.8 C14.8 7.6 13.6 6.8 11 6.9 C8.6 7 7.3 7.8 6.8 9.8Z" fill="#2a201e"/><path d="M9.1 12.6 Q11 14.2 12.9 12.6" stroke="#f4f0e4" stroke-width="1" fill="none"/><path d="M8.6 9.9H10M12 9.9H13.4" stroke="#2a201e" stroke-width="0.8"/></g></svg><div class="r" style="left:100px;top:234px;width:150px;height:187px;background:#e8f2f2;border-radius:14px;"></div><svg style="left:109px;top:243px" width="133" height="133" viewBox="0 0 132 132"><defs><radialGradient id="bgb6" cx="0.6" cy="0.35" r="0.75"><stop offset="0" stop-color="#2e1e1e"/><stop offset="1" stop-color="#120b0b"/></radialGradient><linearGradient id="tbb6" x1="0" y1="0" x2="0" y2="1"><stop offset="0" stop-color="#120b0b"/><stop offset="0.25" stop-color="#3a2c2a"/><stop offset="1" stop-color="#120b0b"/></linearGradient><clipPath id="clb6"><rect width="132" height="132" rx="7.5"/></clipPath></defs><g clip-path="url(#clb6)"><rect width="132" height="132" fill="url(#bgb6)"/><rect y="104" width="132" height="28" fill="url(#tbb6)"/><path d="M40 112H132M48 118H132M36 124H132" stroke="#e2c4bc" stroke-width="0.5" opacity="0.12"/><path d="M70 19 q-2.5 -3 0 -6.5 q2.5 -3 0 -6.5 M73.5 19 q-2.5 -3 0 -6.5 q2.5 -3 0 -6.5 M76.5 18 q-2 -2.5 0 -5 q2 -2.5 0 -5" stroke="#eadcdc" stroke-width="0.9" fill="none" opacity="0.9"/><path d="M61.5 22 H83 Q82.5 35.5 72.3 36 Q62 35.5 61.5 22Z" fill="#eadcdc"/><ellipse cx="72.2" cy="22.6" rx="10.5" ry="1.6" fill="#120b0b" opacity="0.5"/><path d="M82.5 25 q7.5 -1.5 6 4.5 q-1.5 4 -8 6" stroke="#eadcdc" stroke-width="1.3" fill="none"/><rect x="64.5" y="36.4" width="18" height="1.8" rx="0.9" fill="#eadcdc" opacity="0.85"/><path d="M42 29.4 H59 M92 29.4 H109" stroke="#e2c4bc" stroke-width="0.9" opacity="0.75"/><text x="22" y="60" font-family="Liberation Serif" font-style="italic" font-size="28" fill="#e2c4bc" stroke="#e2c4bc" stroke-width="0.7" letter-spacing="-1.6" transform="rotate(-6 50 55)">Brew</text><text x="77" y="58" font-family="Liberation Serif" font-style="italic" font-size="18" fill="#eadcdc">&amp;</text><text x="90" y="53" font-family="Liberation Serif" font-style="italic" font-size="30" fill="#e2c4bc" stroke="#e2c4bc" stroke-width="0.7" letter-spacing="-1.4" transform="rotate(-6 108 48)">Sip</text><path d="M37 62.4 H62 M89 62.4 H103" stroke="#e2c4bc" stroke-width="0.8" opacity="0.8"/><text x="75.3" y="66.3" text-anchor="middle" font-family="Liberation Sans" font-size="7.2" fill="#e2c4bc" letter-spacing="0.6">ONID</text><path d="M49 67.5 Q75 76 101.5 67.5 M55 70 Q75 75 95 70" stroke="#e2c4bc" stroke-width="0.7" fill="none" opacity="0.85"/><circle cx="75.3" cy="73" r="1" fill="#e2c4bc"/><path d="M45 73 Q75 92 106 72" stroke="#e2c4bc" stroke-width="2.6" fill="none" stroke-dasharray="1.8 1.6" opacity="0.55"/><radialGradient id="smb6" cx="0.5" cy="0.5" r="0.5"><stop offset="0" stop-color="#eadcdc" stop-opacity="0.16"/><stop offset="1" stop-color="#eadcdc" stop-opacity="0"/></radialGradient><ellipse cx="14" cy="74" rx="20" ry="30" fill="url(#smb6)"/><path d="M8 96 q8 -12 2 -22 q-6 -10 6 -22 M18 98 q7 -10 1 -19 q-5 -8 7 -16 M4 90 q4 -8 0 -16 M12 70 q8 -4 6 -12 q-2 -6 4 -10 M22 88 q5 -6 2 -12" stroke="#eadcdc" stroke-width="0.8" fill="none" opacity="0.38"/><ellipse cx="22" cy="124.5" rx="27" ry="3.4" fill="#3a2020"/><path d="M-5 125.5 Q22 131 49 124.5" stroke="#d8d0c4" stroke-width="1" fill="none" opacity="0.8"/><path d="M36 106 q11 -2 10 7 q-1 6 -10 8" stroke="#1c120c" stroke-width="2.4" fill="none"/><path d="M-2 100.5 H36.5 Q36 121 26 124 H-2Z" fill="#3a2020"/><ellipse cx="17" cy="100.5" rx="19.5" ry="3.6" fill="#eadcdc" opacity="0.9"/><ellipse cx="17" cy="101" rx="17.5" ry="2.6" fill="#b29a78"/></g></svg><div class="t" style="left:108.00px;top:381.32px;font-size:10.6px;line-height:14px;color:#9c9c8a;letter-spacing:0.3px;">brew and sip</div><div class="t" style="left:108.00px;top:397.82px;font-size:10.6px;line-height:14px;color:#5050d0;letter-spacing:0.3px;">brew&amp;sip.com</div><div class="r" style="left:103px;top:424px;width:147px;height:28px;background:#e8f2f2;border-radius:12px;"></div><div class="t" style="left:113.50px;top:430.87px;font-size:10.6px;line-height:14px;color:#1c2624;letter-spacing:0.29px;">I&#x27;d love that! It&#x27;s this one.</div><div class="r" style="left:37px;top:462px;width:197px;height:28px;background:#8fa09c;border-radius:12px;"></div><div class="t" style="left:48.20px;top:469.02px;font-size:10.6px;line-height:14px;color:#1c2624;letter-spacing:0.29px;">Amazing, I&#x27;ll see you there at 2pm?</div><svg style="left:10px;top:465px" width="22" height="22" viewBox="0 0 22 22"><defs><clipPath id="ac"><circle cx="11" cy="11" r="10.6"/></clipPath></defs><g clip-path="url(#ac)"><rect width="22" height="22" fill="#ddd0cc"/><path d="M2 22 Q3 16.5 8 15.5 L11 17.5 L14 15.5 Q19 16.5 20 22Z" fill="#7e8a88"/><path d="M9.2 13.5 H12.8 V16.5 L11 17.5 L9.2 16.5Z" fill="#c09a8e"/><ellipse cx="11" cy="10.6" rx="3.7" ry="4.6" fill="#c09a8e"/><path d="M6.8 9.8 C6 5.2 8.2 3.2 11.2 3.3 C14.5 3.4 16.2 5.6 15.2 9.8 C14.8 7.6 13.6 6.8 11 6.9 C8.6 7 7.3 7.8 6.8 9.8Z" fill="#2a201e"/><path d="M9.1 12.6 Q11 14.2 12.9 12.6" stroke="#f4f0e4" stroke-width="1" fill="none"/><path d="M8.6 9.9H10M12 9.9H13.4" stroke="#2a201e" stroke-width="0.8"/></g></svg><div class="r" style="left:180px;top:500px;width:70px;height:28px;background:#e8f2f2;border-radius:12px;"></div><div class="t" style="left:190.90px;top:506.72px;font-size:10.6px;line-height:14px;color:#1c2624;letter-spacing:0.29px;">Let&#x27;s do it</div><div class="r" style="left:0px;top:515px;width:262px;height:60px;background:#0f2626;"></div><svg style="left:11.1px;top:531.5px" width="15" height="15" viewBox="0 0 15 15"><circle cx="7.5" cy="7.5" r="6.4" stroke="#c9b8ff" stroke-width="1.3" fill="none"/><path d="M7.5 4V11M4 7.5H11" stroke="#c9b8ff" stroke-width="1.3"/></svg><svg style="left:37.9px;top:531.5px" width="15" height="15" viewBox="0 0 15 15"><circle cx="7.5" cy="7.5" r="6.4" stroke="#c9b8ff" stroke-width="1.3" fill="none"/><circle cx="5.3" cy="6" r="0.9" fill="#c9b8ff"/><circle cx="9.7" cy="6" r="0.9" fill="#c9b8ff"/><path d="M4.3 8.3 Q7.5 12.5 10.7 8.3Z" fill="#c9b8ff"/></svg><div class="r" style="left:70px;top:521px;width:176px;height:37px;background:#e3eeee;border-radius:18.5px;"></div><div class="t" style="left:80.30px;top:532.32px;font-size:10.6px;line-height:14px;color:#4a4752;letter-spacing:0.45px;">Write A Message</div></div><div class="r" style="left:1601px;top:1167px;width:70px;height:30px;background:transparent;border:2px solid #efbe5c;"></div><div class="a" style="left:1696px;top:668px;width:262px;height:569px;border:2px solid #000;border-radius:0 0 4px 4px;background:#22304f;overflow:hidden;"><div class="r" style="left:0px;top:0px;width:262px;height:43px;background:#0c2540;"></div><svg style="left:15px;top:16.5px" width="8" height="10" viewBox="0 0 8 10"><path d="M6 1L2 5L6 9" stroke="#ffffff" stroke-width="1.5" fill="none"/></svg><div class="t" style="left:37.40px;top:13.02px;font-size:13.8px;line-height:18px;color:#ffffff;">Greg</div><svg style="left:240.5px;top:16.5px" width="6" height="12" viewBox="0 0 6 12"><circle cx="3" cy="1.5" r="1.4" fill="#fff"/><circle cx="3" cy="6" r="1.4" fill="#fff"/><circle cx="3" cy="10.5" r="1.4" fill="#fff"/></svg><div class="r" style="left:37px;top:56px;width:145px;height:29px;background:#919ab8;border-radius:12px;"></div><div class="t" style="left:48.20px;top:63.12px;font-size:10.6px;line-height:14px;color:#1e2234;letter-spacing:0.29px;">Haha, next time for sure!</div><svg style="left:10px;top:59px" width="22" height="22" viewBox="0 0 22 22"><defs><clipPath id="ac"><circle cx="11" cy="11" r="10.6"/></clipPath></defs><g clip-path="url(#ac)"><rect width="22" height="22" fill="#ddd0cc"/><path d="M2 22 Q3 16.5 8 15.5 L11 17.5 L14 15.5 Q19 16.5 20 22Z" fill="#7e8a88"/><path d="M9.2 13.5 H12.8 V16.5 L11 17.5 L9.2 16.5Z" fill="#c09a8e"/><ellipse cx="11" cy="10.6" rx="3.7" ry="4.6" fill="#c09a8e"/><path d="M6.8 9.8 C6 5.2 8.2 3.2 11.2 3.3 C14.5 3.4 16.2 5.6 15.2 9.8 C14.8 7.6 13.6 6.8 11 6.9 C8.6 7 7.3 7.8 6.8 9.8Z" fill="#2a201e"/><path d="M9.1 12.6 Q11 14.2 12.9 12.6" stroke="#f4f0e4" stroke-width="1" fill="none"/><path d="M8.6 9.9H10M12 9.9H13.4" stroke="#2a201e" stroke-width="0.8"/></g></svg><div class="t" style="left:106.20px;top:99.58px;font-size:11.3px;line-height:15px;color:#e8ecf4;">Yesterday</div><div class="r" style="left:37px;top:130px;width:213px;height:45px;background:#919ab8;border-radius:12px;"></div><div class="t" style="left:48.20px;top:136.97px;font-size:10.6px;line-height:14px;color:#1e2234;letter-spacing:0.29px;">Hey! Should we go to that cafe you</div><div class="t" style="left:48.20px;top:152.07px;font-size:10.6px;line-height:14px;color:#1e2234;letter-spacing:0.29px;">mentioned last time?</div><svg style="left:10px;top:141px" width="22" height="22" viewBox="0 0 22 22"><defs><clipPath id="ac"><circle cx="11" cy="11" r="10.6"/></clipPath></defs><g clip-path="url(#ac)"><rect width="22" height="22" fill="#ddd0cc"/><path d="M2 22 Q3 16.5 8 15.5 L11 17.5 L14 15.5 Q19 16.5 20 22Z" fill="#7e8a88"/><path d="M9.2 13.5 H12.8 V16.5 L11 17.5 L9.2 16.5Z" fill="#c09a8e"/><ellipse cx="11" cy="10.6" rx="3.7" ry="4.6" fill="#c09a8e"/><path d="M6.8 9.8 C6 5.2 8.2 3.2 11.2 3.3 C14.5 3.4 16.2 5.6 15.2 9.8 C14.8 7.6 13.6 6.8 11 6.9 C8.6 7 7.3 7.8 6.8 9.8Z" fill="#2a201e"/><path d="M9.1 12.6 Q11 14.2 12.9 12.6" stroke="#f4f0e4" stroke-width="1" fill="none"/><path d="M8.6 9.9H10M12 9.9H13.4" stroke="#2a201e" stroke-width="0.8"/></g></svg><div class="r" style="left:37px;top:191px;width:161px;height:28px;background:#919ab8;border-radius:12px;"></div><div class="t" style="left:48.20px;top:197.97px;font-size:10.6px;line-height:14px;color:#1e2234;letter-spacing:0.29px;">I forgot what it was called...</div><svg style="left:10px;top:194px" width="22" height="22" viewBox="0 0 22 22"><defs><clipPath id="ac"><circle cx="11" cy="11" r="10.6"/></clipPath></defs><g clip-path="url(#ac)"><rect width="22" height="22" fill="#ddd0cc"/><path d="M2 22 Q3 16.5 8 15.5 L11 17.5 L14 15.5 Q19 16.5 20 22Z" fill="#7e8a88"/><path d="M9.2 13.5 H12.8 V16.5 L11 17.5 L9.2 16.5Z" fill="#c09a8e"/><ellipse cx="11" cy="10.6" rx="3.7" ry="4.6" fill="#c09a8e"/><path d="M6.8 9.8 C6 5.2 8.2 3.2 11.2 3.3 C14.5 3.4 16.2 5.6 15.2 9.8 C14.8 7.6 13.6 6.8 11 6.9 C8.6 7 7.3 7.8 6.8 9.8Z" fill="#2a201e"/><path d="M9.1 12.6 Q11 14.2 12.9 12.6" stroke="#f4f0e4" stroke-width="1" fill="none"/><path d="M8.6 9.9H10M12 9.9H13.4" stroke="#2a201e" stroke-width="0.8"/></g></svg><div class="r" style="left:100px;top:234px;width:150px;height:187px;background:#e8f5e0;border-radius:14px;"></div><svg style="left:109px;top:243px" width="133" height="133" viewBox="0 0 132 132"><defs><radialGradient id="bgb7" cx="0.6" cy="0.35" r="0.75"><stop offset="0" stop-color="#2e1e1e"/><stop offset="1" stop-color="#120b0b"/></radialGradient><linearGradient id="tbb7" x1="0" y1="0" x2="0" y2="1"><stop offset="0" stop-color="#120b0b"/><stop offset="0.25" stop-color="#3a2c2a"/><stop offset="1" stop-color="#120b0b"/></linearGradient><clipPath id="clb7"><rect width="132" height="132" rx="7.5"/></clipPath></defs><g clip-path="url(#clb7)"><rect width="132" height="132" fill="url(#bgb7)"/><rect y="104" width="132" height="28" fill="url(#tbb7)"/><path d="M40 112H132M48 118H132M36 124H132" stroke="#e2c4bc" stroke-width="0.5" opacity="0.12"/><path d="M70 19 q-2.5 -3 0 -6.5 q2.5 -3 0 -6.5 M73.5 19 q-2.5 -3 0 -6.5 q2.5 -3 0 -6.5 M76.5 18 q-2 -2.5 0 -5 q2 -2.5 0 -5" stroke="#eadcdc" stroke-width="0.9" fill="none" opacity="0.9"/><path d="M61.5 22 H83 Q82.5 35.5 72.3 36 Q62 35.5 61.5 22Z" fill="#eadcdc"/><ellipse cx="72.2" cy="22.6" rx="10.5" ry="1.6" fill="#120b0b" opacity="0.5"/><path d="M82.5 25 q7.5 -1.5 6 4.5 q-1.5 4 -8 6" stroke="#eadcdc" stroke-width="1.3" fill="none"/><rect x="64.5" y="36.4" width="18" height="1.8" rx="0.9" fill="#eadcdc" opacity="0.85"/><path d="M42 29.4 H59 M92 29.4 H109" stroke="#e2c4bc" stroke-width="0.9" opacity="0.75"/><text x="22" y="60" font-family="Liberation Serif" font-style="italic" font-size="28" fill="#e2c4bc" stroke="#e2c4bc" stroke-width="0.7" letter-spacing="-1.6" transform="rotate(-6 50 55)">Brew</text><text x="77" y="58" font-family="Liberation Serif" font-style="italic" font-size="18" fill="#eadcdc">&amp;</text><text x="90" y="53" font-family="Liberation Serif" font-style="italic" font-size="30" fill="#e2c4bc" stroke="#e2c4bc" stroke-width="0.7" letter-spacing="-1.4" transform="rotate(-6 108 48)">Sip</text><path d="M37 62.4 H62 M89 62.4 H103" stroke="#e2c4bc" stroke-width="0.8" opacity="0.8"/><text x="75.3" y="66.3" text-anchor="middle" font-family="Liberation Sans" font-size="7.2" fill="#e2c4bc" letter-spacing="0.6">ONID</text><path d="M49 67.5 Q75 76 101.5 67.5 M55 70 Q75 75 95 70" stroke="#e2c4bc" stroke-width="0.7" fill="none" opacity="0.85"/><circle cx="75.3" cy="73" r="1" fill="#e2c4bc"/><path d="M45 73 Q75 92 106 72" stroke="#e2c4bc" stroke-width="2.6" fill="none" stroke-dasharray="1.8 1.6" opacity="0.55"/><radialGradient id="smb7" cx="0.5" cy="0.5" r="0.5"><stop offset="0" stop-color="#eadcdc" stop-opacity="0.16"/><stop offset="1" stop-color="#eadcdc" stop-opacity="0"/></radialGradient><ellipse cx="14" cy="74" rx="20" ry="30" fill="url(#smb7)"/><path d="M8 96 q8 -12 2 -22 q-6 -10 6 -22 M18 98 q7 -10 1 -19 q-5 -8 7 -16 M4 90 q4 -8 0 -16 M12 70 q8 -4 6 -12 q-2 -6 4 -10 M22 88 q5 -6 2 -12" stroke="#eadcdc" stroke-width="0.8" fill="none" opacity="0.38"/><ellipse cx="22" cy="124.5" rx="27" ry="3.4" fill="#3a2020"/><path d="M-5 125.5 Q22 131 49 124.5" stroke="#d8d0c4" stroke-width="1" fill="none" opacity="0.8"/><path d="M36 106 q11 -2 10 7 q-1 6 -10 8" stroke="#1c120c" stroke-width="2.4" fill="none"/><path d="M-2 100.5 H36.5 Q36 121 26 124 H-2Z" fill="#3a2020"/><ellipse cx="17" cy="100.5" rx="19.5" ry="3.6" fill="#eadcdc" opacity="0.9"/><ellipse cx="17" cy="101" rx="17.5" ry="2.6" fill="#b29a78"/></g></svg><div class="t" style="left:108.00px;top:381.32px;font-size:10.6px;line-height:14px;color:#9c9c8a;letter-spacing:0.3px;">brew and sip</div><div class="t" style="left:108.00px;top:397.82px;font-size:10.6px;line-height:14px;color:#5050d0;letter-spacing:0.3px;">brew&amp;sip.com</div><div class="r" style="left:103px;top:424px;width:147px;height:28px;background:#e8f5e0;border-radius:12px;"></div><div class="t" style="left:113.50px;top:430.87px;font-size:10.6px;line-height:14px;color:#1e2234;letter-spacing:0.29px;">I&#x27;d love that! It&#x27;s this one.</div><div class="r" style="left:37px;top:462px;width:197px;height:28px;background:#919ab8;border-radius:12px;"></div><div class="t" style="left:48.20px;top:469.02px;font-size:10.6px;line-height:14px;color:#1e2234;letter-spacing:0.29px;">Amazing, I&#x27;ll see you there at 2pm?</div><svg style="left:10px;top:465px" width="22" height="22" viewBox="0 0 22 22"><defs><clipPath id="ac"><circle cx="11" cy="11" r="10.6"/></clipPath></defs><g clip-path="url(#ac)"><rect width="22" height="22" fill="#ddd0cc"/><path d="M2 22 Q3 16.5 8 15.5 L11 17.5 L14 15.5 Q19 16.5 20 22Z" fill="#7e8a88"/><path d="M9.2 13.5 H12.8 V16.5 L11 17.5 L9.2 16.5Z" fill="#c09a8e"/><ellipse cx="11" cy="10.6" rx="3.7" ry="4.6" fill="#c09a8e"/><path d="M6.8 9.8 C6 5.2 8.2 3.2 11.2 3.3 C14.5 3.4 16.2 5.6 15.2 9.8 C14.8 7.6 13.6 6.8 11 6.9 C8.6 7 7.3 7.8 6.8 9.8Z" fill="#2a201e"/><path d="M9.1 12.6 Q11 14.2 12.9 12.6" stroke="#f4f0e4" stroke-width="1" fill="none"/><path d="M8.6 9.9H10M12 9.9H13.4" stroke="#2a201e" stroke-width="0.8"/></g></svg><div class="r" style="left:180px;top:500px;width:70px;height:28px;background:#e8f5e0;border-radius:12px;"></div><div class="t" style="left:190.90px;top:506.72px;font-size:10.6px;line-height:14px;color:#1e2234;letter-spacing:0.29px;">Let&#x27;s do it</div><div class="r" style="left:0px;top:515px;width:262px;height:60px;background:#0c2540;"></div><svg style="left:11.1px;top:531.5px" width="15" height="15" viewBox="0 0 15 15"><circle cx="7.5" cy="7.5" r="6.4" stroke="#c9b8ff" stroke-width="1.3" fill="none"/><path d="M7.5 4V11M4 7.5H11" stroke="#c9b8ff" stroke-width="1.3"/></svg><svg style="left:37.9px;top:531.5px" width="15" height="15" viewBox="0 0 15 15"><circle cx="7.5" cy="7.5" r="6.4" stroke="#c9b8ff" stroke-width="1.3" fill="none"/><circle cx="5.3" cy="6" r="0.9" fill="#c9b8ff"/><circle cx="9.7" cy="6" r="0.9" fill="#c9b8ff"/><path d="M4.3 8.3 Q7.5 12.5 10.7 8.3Z" fill="#c9b8ff"/></svg><div class="r" style="left:70px;top:521px;width:176px;height:37px;background:#e3e8f3;border-radius:18.5px;"></div><div class="t" style="left:80.30px;top:532.32px;font-size:10.6px;line-height:14px;color:#4a4752;letter-spacing:0.45px;">Write A Message</div></div><div class="r" style="left:1877px;top:1167px;width:70px;height:30px;background:transparent;border:2px solid #efbe5c;"></div><div class="t" style="left:1146.60px;top:626.46px;font-size:23.2px;line-height:30px;color:#dfe1e5;">Deuteranomaly</div><svg style="left:1378px;top:626px" width="8" height="28" viewBox="0 0 8 28"><circle cx="4" cy="4" r="2.2" fill="#dfe1e5"/><circle cx="4" cy="14" r="2.2" fill="#dfe1e5"/><circle cx="4" cy="24" r="2.2" fill="#dfe1e5"/></svg><div class="t" style="left:1421.60px;top:626.46px;font-size:23.2px;line-height:30px;color:#dfe1e5;">Tritanopes</div><svg style="left:1654px;top:626px" width="8" height="28" viewBox="0 0 8 28"><circle cx="4" cy="4" r="2.2" fill="#dfe1e5"/><circle cx="4" cy="14" r="2.2" fill="#dfe1e5"/><circle cx="4" cy="24" r="2.2" fill="#dfe1e5"/></svg><div class="t" style="left:1697.60px;top:626.46px;font-size:23.2px;line-height:30px;color:#dfe1e5;">Tritanomaly</div><svg style="left:1930px;top:626px" width="8" height="28" viewBox="0 0 8 28"><circle cx="4" cy="4" r="2.2" fill="#dfe1e5"/><circle cx="4" cy="14" r="2.2" fill="#dfe1e5"/><circle cx="4" cy="24" r="2.2" fill="#dfe1e5"/></svg></div></div><div class="r" style="left:3px;top:1026px;width:2333px;height:2px;background:#1e1f22;"></div><div class="r" style="left:4px;top:1028px;width:2332px;height:548px;background:#2b2d30;"></div><div class="t" style="left:28.50px;top:1051.99px;font-size:26px;line-height:34px;color:#dfe1e5;font-weight:bold;">Problems</div><div class="t" style="left:208.80px;top:1051.81px;font-size:26.5px;line-height:34px;color:#dfe1e5;">File</div><div class="t" style="left:307.00px;top:1051.10px;font-size:27.1px;line-height:35px;color:#dfe1e5;">Project Errors</div><div class="t" style="left:530.30px;top:1051.14px;font-size:27px;line-height:35px;color:#dfe1e5;">Compose</div><div class="t" style="left:704.00px;top:1050.43px;font-size:27.6px;line-height:36px;color:#dfe1e5;">ChatInterfaceScreenPreview (sortedChatDetails 0)</div><div class="t" style="left:1343.80px;top:1051.14px;font-size:27px;line-height:35px;color:#868a91;">18</div><svg style="left:1399px;top:1063px" width="16" height="15" viewBox="0 0 16 15"><path d="M1 0.5L15 14.5M15 0.5L1 14.5" stroke="#8c8f94" stroke-width="1.8"/></svg><div class="r" style="left:3px;top:1108px;width:2333px;height:2px;background:#1e1f22;"></div><div class="r" style="left:676px;top:1104px;width:761px;height:5px;background:#3574f0;border-radius:3px;"></div><svg style="left:2236px;top:1054px" width="8" height="28" viewBox="0 0 8 28"><circle cx="4" cy="4" r="2.5" fill="#dfe1e5"/><circle cx="4" cy="14" r="2.5" fill="#dfe1e5"/><circle cx="4" cy="24" r="2.5" fill="#dfe1e5"/></svg><div class="r" style="left:2281px;top:1066px;width:27px;height:3px;background:#dfe1e5;"></div><svg style="left:22px;top:1130px" width="40" height="32" viewBox="22 1130 40 32"><path d="M48.9 1136.8 A12 12 0 0 0 30.3 1147.5" stroke="#6e7073" stroke-width="2.1" fill="none"/><path d="M26.1 1144.1 L30.8 1148.8 L35.5 1144.1" stroke="#6e7073" stroke-width="2.1" fill="none"/><path d="M34.8 1155.5 A12 12 0 0 0 53.6 1144.5" stroke="#6e7073" stroke-width="2.1" fill="none"/><path d="M48.9 1147.5 L53.6 1142.8 L58.3 1147.5" stroke="#6e7073" stroke-width="2.1" fill="none"/></svg><svg style="left:22px;top:1184px" width="42" height="34" viewBox="22 1184 42 34"><path d="M26.6 1198 Q34 1187.5 41.9 1187.5 Q49.8 1187.5 57.2 1198 Q49.8 1208.5 41.9 1208.5 Q34 1208.5 26.6 1198Z" stroke="#ced0d6" stroke-width="2.1" fill="none"/><circle cx="41.9" cy="1198" r="5.6" stroke="#ced0d6" stroke-width="2.1" fill="none"/><path d="M60.3 1207.8 L60.3 1215.8 L52.3 1215.8Z" fill="#ced0d6"/></svg><div class="r" style="left:20px;top:1228px;width:44px;height:44px;background:#46484d;border-radius:8px;"></div><svg style="left:29px;top:1237px" width="26" height="26" viewBox="0 0 26 26"><rect x="2" y="2.5" width="22" height="21" rx="3" stroke="#ced0d6" stroke-width="2" fill="none"/><path d="M10 3V23M14 8H20M14 13H20M14 18H20" stroke="#ced0d6" stroke-width="2"/></svg><svg style="left:28px;top:1284px" width="28" height="36" viewBox="28 1284 28 36"><path d="M41.9 1287.2 A9.8 9.8 0 0 0 35.8 1304.5 L36.6 1307.8 H47.2 L48 1304.5 A9.8 9.8 0 0 0 41.9 1287.2Z" fill="#edc96b"/><path d="M37.3 1311.3H46.5M38.2 1315.3H45.6" stroke="#dfe1e5" stroke-width="2" stroke-linecap="round"/></svg><svg style="left:112px;top:1134px" width="20" height="16" viewBox="0 0 20 16"><path d="M2.5 3.5L10 11L17.5 3.5" stroke="#ced0d6" stroke-width="2" fill="none"/></svg><div class="t" style="left:150.80px;top:1126.14px;font-size:27px;line-height:35px;color:#dfe1e5;">UI Check</div><div class="t" style="left:276.40px;top:1126.14px;font-size:27px;line-height:35px;color:#868a91;">18 problems</div><div class="r" style="left:106px;top:1214px;width:1077px;height:47px;background:#2f426d;border-radius:7px;"></div><svg style="left:189px;top:1177.0px" width="26" height="24" viewBox="0 0 26 24"><path d="M13 3.5 L22.8 21.2 H3.2 Z" fill="#c4a55c" stroke="#c4a55c" stroke-width="4.2" stroke-linejoin="round"/><rect x="11.1" y="5" width="3.8" height="9.8" rx="1.9" fill="#2b2d30"/><circle cx="13" cy="18.9" r="1.95" fill="#2b2d30"/></svg><div class="t" style="left:224.50px;top:1173.23px;font-size:27.6px;line-height:36px;color:#dfe1e5;">Composable is partially hidden in layout</div><svg style="left:189px;top:1224.8px" width="26" height="24" viewBox="0 0 26 24"><path d="M13 3.5 L22.8 21.2 H3.2 Z" fill="#c4a55c" stroke="#c4a55c" stroke-width="4.2" stroke-linejoin="round"/><rect x="11.1" y="5" width="3.8" height="9.8" rx="1.9" fill="#2b2d30"/><circle cx="13" cy="18.9" r="1.95" fill="#2b2d30"/></svg><div class="t" style="left:224.50px;top:1221.03px;font-size:27.6px;line-height:36px;color:#dfe1e5;">Composable is partially hidden in layout</div><svg style="left:189px;top:1272.6px" width="26" height="24" viewBox="0 0 26 24"><path d="M13 3.5 L22.8 21.2 H3.2 Z" fill="#c4a55c" stroke="#c4a55c" stroke-width="4.2" stroke-linejoin="round"/><rect x="11.1" y="5" width="3.8" height="9.8" rx="1.9" fill="#2b2d30"/><circle cx="13" cy="18.9" r="1.95" fill="#2b2d30"/></svg><div class="t" style="left:224.50px;top:1268.83px;font-size:27.6px;line-height:36px;color:#dfe1e5;">ImageView is partially hidden in layout</div><svg style="left:189px;top:1320.4px" width="26" height="24" viewBox="0 0 26 24"><path d="M13 3.5 L22.8 21.2 H3.2 Z" fill="#c4a55c" stroke="#c4a55c" stroke-width="4.2" stroke-linejoin="round"/><rect x="11.1" y="5" width="3.8" height="9.8" rx="1.9" fill="#2b2d30"/><circle cx="13" cy="18.9" r="1.95" fill="#2b2d30"/></svg><div class="t" style="left:224.50px;top:1316.63px;font-size:27.6px;line-height:36px;color:#dfe1e5;">ImageView is partially hidden in layout</div><svg style="left:189px;top:1368.2px" width="26" height="24" viewBox="0 0 26 24"><path d="M13 3.5 L22.8 21.2 H3.2 Z" fill="#c4a55c" stroke="#c4a55c" stroke-width="4.2" stroke-linejoin="round"/><rect x="11.1" y="5" width="3.8" height="9.8" rx="1.9" fill="#2b2d30"/><circle cx="13" cy="18.9" r="1.95" fill="#2b2d30"/></svg><div class="t" style="left:224.50px;top:1364.43px;font-size:27.6px;line-height:36px;color:#dfe1e5;">ImageView is partially hidden in layout</div><svg style="left:189px;top:1416.0px" width="26" height="24" viewBox="0 0 26 24"><path d="M13 3.5 L22.8 21.2 H3.2 Z" fill="#c4a55c" stroke="#c4a55c" stroke-width="4.2" stroke-linejoin="round"/><rect x="11.1" y="5" width="3.8" height="9.8" rx="1.9" fill="#2b2d30"/><circle cx="13" cy="18.9" r="1.95" fill="#2b2d30"/></svg><div class="t" style="left:224.50px;top:1412.23px;font-size:27.6px;line-height:36px;color:#dfe1e5;">ImageView is partially hidden in layout</div><svg style="left:189px;top:1463.8px" width="26" height="24" viewBox="0 0 26 24"><path d="M13 3.5 L22.8 21.2 H3.2 Z" fill="#c4a55c" stroke="#c4a55c" stroke-width="4.2" stroke-linejoin="round"/><rect x="11.1" y="5" width="3.8" height="9.8" rx="1.9" fill="#2b2d30"/><circle cx="13" cy="18.9" r="1.95" fill="#2b2d30"/></svg><div class="t" style="left:224.50px;top:1460.03px;font-size:27.6px;line-height:36px;color:#dfe1e5;">Insufficient image color contrast ratio</div><svg style="left:189px;top:1511.6px" width="26" height="24" viewBox="0 0 26 24"><path d="M13 3.5 L22.8 21.2 H3.2 Z" fill="#c4a55c" stroke="#c4a55c" stroke-width="4.2" stroke-linejoin="round"/><rect x="11.1" y="5" width="3.8" height="9.8" rx="1.9" fill="#2b2d30"/><circle cx="13" cy="18.9" r="1.95" fill="#2b2d30"/></svg><div class="t" style="left:224.50px;top:1507.83px;font-size:27.6px;line-height:36px;color:#dfe1e5;">Insufficient image color contrast ratio</div><svg style="left:189px;top:1559.4px" width="26" height="24" viewBox="0 0 26 24"><path d="M13 3.5 L22.8 21.2 H3.2 Z" fill="#c4a55c" stroke="#c4a55c" stroke-width="4.2" stroke-linejoin="round"/><rect x="11.1" y="5" width="3.8" height="9.8" rx="1.9" fill="#2b2d30"/><circle cx="13" cy="18.9" r="1.95" fill="#2b2d30"/></svg><div class="t" style="left:224.50px;top:1555.63px;font-size:27.6px;line-height:36px;color:#dfe1e5;">Insufficient text color contrast ratio</div><div class="r" style="left:1208px;top:1110px;width:2px;height:466px;background:#1e1f22;"></div><div class="t" style="left:1234.80px;top:1145.72px;font-size:26.2px;line-height:34px;color:#dfe1e5;font-weight:bold;letter-spacing:-0.05px;">Composable is partially hidden in layout</div><div class="t" style="left:1234.50px;top:1202.13px;font-size:27.9px;line-height:36px;color:#dfe1e5;">Composable is partially hidden in layout because it is not contained within the bounds of</div><div class="t" style="left:1234.50px;top:1236.33px;font-size:27.9px;line-height:36px;color:#dfe1e5;">its parent in 13 preview configurations.</div><div class="t" style="left:1234.50px;top:1269.83px;font-size:27.9px;line-height:36px;color:#dfe1e5;">Fix this issue by adjusting the size or position of Composable.</div><div class="t" style="left:1234.60px;top:1322.02px;font-size:26.2px;line-height:34px;color:#dfe1e5;font-weight:bold;">Affected Files:</div><div class="t" style="left:1237.00px;top:1361.49px;font-size:28.3px;line-height:37px;color:#6c9cf5;">datingandfriends/src/main/java/com/ibm/google/datingandfriends/ui/screens/ChatInt...</div><div class="t" style="left:1237.00px;top:1394.99px;font-size:28.3px;line-height:37px;color:#6c9cf5;">datingandfriends/src/main/java/com/ibm/google/datingandfriends/ui/component/Chat...</div><div class="r" style="left:1240px;top:1454px;width:222px;height:56px;background:transparent;box-sizing:border-box;border:2px solid #4e5157;border-radius:9px;"></div><svg style="left:1269px;top:1467px" width="30" height="30" viewBox="0 0 30 30"><defs><linearGradient id="spk" x1="0" y1="0" x2="1" y2="1"><stop offset="0" stop-color="#5ea0ff"/><stop offset="1" stop-color="#3a6df0"/></linearGradient></defs><path d="M15 0.5 Q16.5 13.5 29.5 15 Q16.5 16.5 15 29.5 Q13.5 16.5 0.5 15 Q13.5 13.5 15 0.5Z" fill="url(#spk)"/></svg><div class="t" style="left:1309.00px;top:1464.50px;font-size:27.4px;line-height:36px;color:#dfe1e5;">Fix with AI</div></body></html>
